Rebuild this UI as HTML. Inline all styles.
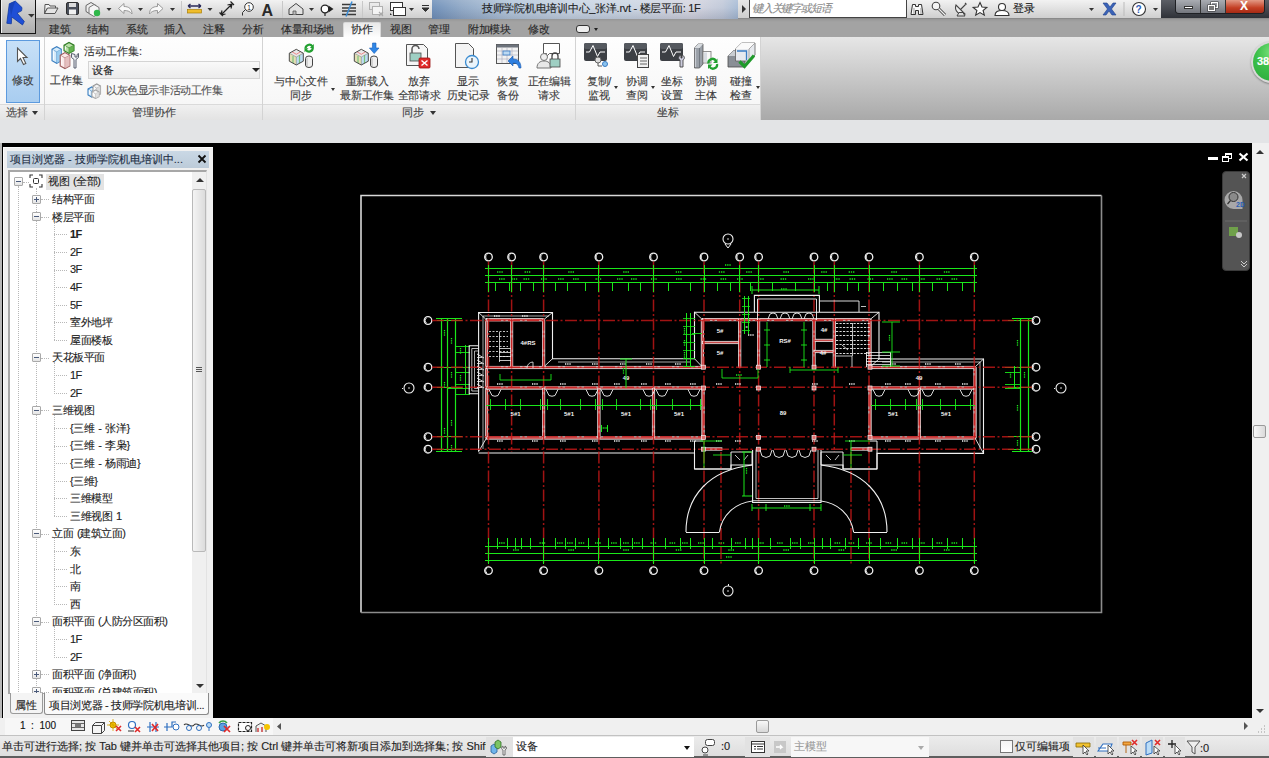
<!DOCTYPE html>
<html><head><meta charset="utf-8">
<style>
*{margin:0;padding:0;box-sizing:border-box}
html,body{width:1269px;height:758px;overflow:hidden;background:#e3e4e6;font-family:"Liberation Sans",sans-serif;font-size:11px;color:#222}
.t,.tab,.row,.btxt,.plab{-webkit-text-stroke:0.12px currentColor}
.a{position:absolute}
.t{position:absolute;white-space:nowrap;line-height:1}
#tb{left:0;top:0;width:1269px;height:19px;background:linear-gradient(#f2f2f2,#cfcfcf);border-bottom:1px solid #8a8a8a}
#tabs{left:0;top:19px;width:1269px;height:18px;background:linear-gradient(#979797,#a3a3a3 3px,#a3a3a3)}
#logo{left:0;top:0;width:36px;height:34px;background:linear-gradient(#dadada,#adadad);border:1px solid #151515;border-top:0;box-shadow:inset 1px 0 0 #f2f2f2}
#ribbon{left:0;top:37px;width:1269px;height:83px;background:linear-gradient(#e6e6e6,#a9a9a9)}
.panel{position:absolute;top:0;height:83px;background:linear-gradient(#fefefe,#f5f5f5);border-right:1px solid #d3d3d3}
.plab{position:absolute;left:0;bottom:0;width:100%;height:16px;background:linear-gradient(#f0f0f0,#e3e3e3);border-top:1px solid #dadada;text-align:center;font-size:11px;line-height:15px;color:#444}
.btxt{position:absolute;width:60px;text-align:center;font-size:11px;letter-spacing:-0.25px;line-height:14px;color:#3a3a3a;white-space:nowrap}
.tab{position:absolute;top:24px;font-size:11px;letter-spacing:-0.5px;color:#2a2a2a;line-height:1;white-space:nowrap}
#frame{left:0;top:143px;width:1269px;height:575px;background:#000}
#browser{left:3px;top:147px;width:210px;height:571px;background:#f0f0f0;border-left:1px solid #fcfcfc;border-top:1px solid #fcfcfc}
#canvas{left:213px;top:143px;width:1039px;height:575px;background:#000}
#vscroll{left:1252px;top:143px;width:17px;height:575px;background:#f0f0f0}
#vcb{left:0;top:718px;width:1269px;height:18px;background:#f0f0f0}
#status{left:0;top:735px;width:1269px;height:23px;background:linear-gradient(#ececec,#dedede);border-top:1px solid #c2c2c2;border-bottom:2px solid #5e5e5e}
.row{position:absolute;font-size:11px;letter-spacing:-0.5px;word-spacing:1.5px;line-height:14px;color:#222;white-space:nowrap}
.exp{position:absolute;width:9px;height:9px;border:1px solid #a9a9a9;background:linear-gradient(#fff,#e4e4e4);border-radius:1px}
.exp:before{content:"";position:absolute;left:1px;top:3px;width:5px;height:1px;background:#4a5a7a}
.exp.p:after{content:"";position:absolute;left:3px;top:1px;width:1px;height:5px;background:#4a5a7a}
.dv{position:absolute;border-left:1px dotted #b8b8b8;width:0}
.dh{position:absolute;border-top:1px dotted #b8b8b8;height:0}
</style></head><body>
<div id="tb" class="a"></div>
<div id="tabs" class="a"></div>
<div id="logo" class="a">
<svg width="35" height="34" style="position:absolute;left:0;top:0">
<path d="M5.8 23.3 L8.3 3.8 L14.3 1.1 L21 7.6 L20.6 10.8 L16.1 13 L23.3 21.5 L21.5 24.9 L10.8 17 L10.3 23.8 Z" fill="#1f4fd6" stroke="#123a9e" stroke-width="0.8"/>
<path d="M8.3 3.8 L14.3 1.1 L12 8 L10 16z" fill="#153fae" opacity=".7"/>
<path d="M27 14.1 L33.6 14.1 L30.5 17.5 Z" fill="#333"/>
</svg>
</div>
<!-- quick access -->
<svg class="a" style="left:0;top:0" width="432" height="19">
 <path d="M45 4.5 h4 l1 1.5 h5.5 v2.5 h-8.5 l-2.5 5.5z" fill="#f4f4f4" stroke="#555" stroke-width="1"/>
 <path d="M44.5 13.5 l3-5.5 h10.5 l-3 5.5z" fill="#e4e4e4" stroke="#555" stroke-width="1"/>
 <rect x="66.5" y="2.5" width="12" height="12" rx="1.5" fill="#4a4f5a" stroke="#2e2e2e"/>
 <rect x="69" y="3" width="7" height="4" fill="#dcdcdc"/>
 <rect x="69" y="9.5" width="7" height="5" fill="#f0f0f0"/>
 <path d="M86 5.5 l5-3 l5 3 v6 l-5 3 l-5-3z" fill="#eee" stroke="#666"/>
 <path d="M89 7.5 l5-3 l5 3 v6 l-5 3 l-5-3z" fill="#f6f6f6" stroke="#777"/>
 <circle cx="97" cy="13" r="3.2" fill="#2fb84a"/>
 <path d="M106.5 8 h5 l-2.5 3z" fill="#333"/>
 <path d="M118.5 8.5 l5.5-5 v3 c5 0 8 2.5 8 7.5 c-2-2.5-4-3.5-8-3.5 v3z" fill="#f9f9f9" stroke="#9a9a9a"/>
 <path d="M138 8 h5 l-2.5 3z" fill="#333"/>
 <path d="M163 8.5 l-5.5-5 v3 c-5 0-8 2.5-8 7.5 c2-2.5 4-3.5 8-3.5 v3z" fill="#f9f9f9" stroke="#9a9a9a"/>
 <path d="M170 8 h5 l-2.5 3z" fill="#333"/>
 <line x1="181.5" y1="1" x2="181.5" y2="18" stroke="#c8c8c8"/>
 <rect x="187.5" y="9.5" width="14" height="3.5" fill="#efbd2c" stroke="#a87e08" stroke-width=".7"/>
 <path d="M188 6 h13 M188 6 l2.5-2 M188 6 l2.5 2 M201 6 l-2.5-2 M201 6 l-2.5 2" stroke="#2a2a5a" stroke-width="1.3" fill="none"/>
 <path d="M207.5 8 h5 l-2.5 3z" fill="#333"/>
 <path d="M221 15 l11-11 M221 15 l1-4.5 M221 15 l4.5-1 M232 4 l-4.5 1 M232 4 l-1 4.5 M219.5 12.5 l3.5 3.5 M230.5 1.5 l3.5 3.5" stroke="#222" stroke-width="1.2" fill="none"/>
 <circle cx="249" cy="7" r="4.3" fill="#fff" stroke="#333"/>
 <text x="247.2" y="9.5" font-size="6.5" fill="#222" font-family="Liberation Sans">1</text>
 <path d="M245 10 l-2.5 2.5 v3" stroke="#333" fill="none"/>
 <text x="261.5" y="15.5" font-size="16" font-weight="bold" fill="#2a2a2a" font-family="Liberation Sans">A</text>
 <line x1="282.5" y1="1" x2="282.5" y2="18" stroke="#c8c8c8"/>
 <path d="M289 9 l7-5.5 l7 5.5 v5.5 h-14z" fill="#e2e2e2" stroke="#444"/>
 <path d="M293 14.5 v-3.5 h3 v3.5" fill="#bbb" stroke="#555" stroke-width=".8"/>
 <path d="M309 8 h5 l-2.5 3z" fill="#333"/>
 <circle cx="325" cy="9" r="3.8" fill="#fff" stroke="#222" stroke-width="1.3"/>
 <path d="M328.5 5.5 l5 3.5 l-5 3.5z" fill="#222"/>
 <path d="M325 13 v3" stroke="#222" stroke-width="1.2"/>
 <path d="M342 4.5 h14 M342 8 h14 M342 11 h14 M342 14.5 h14" stroke="#3a3a3a" stroke-width="1.4"/>
 <path d="M346 16.5 l6-15" stroke="#3e8ed6" stroke-width="1.5"/>
 <line x1="362.5" y1="1" x2="362.5" y2="18" stroke="#c8c8c8"/>
 <rect x="369.5" y="2.5" width="10" height="7" fill="none" stroke="#b0b0b0"/>
 <rect x="372.5" y="6.5" width="10" height="8" fill="#f4f4f4" stroke="#b0b0b0"/>
 <path d="M379 12 l4 4 M383 12 l-4 4" stroke="#aaa" stroke-width="1.2"/>
 <rect x="390.5" y="2.5" width="12" height="8" fill="#fff" stroke="#333"/>
 <rect x="393.5" y="7.5" width="12" height="8" fill="#fff" stroke="#333"/>
 <path d="M390 13 l2 2 l-2 0z" fill="#333"/>
 <path d="M409 8 h5 l-2.5 3z" fill="#333"/>
 <path d="M422 5.5 h7 M422 8 h7 l-3.5 3.5z" stroke="#333" fill="#333"/>
</svg>
<!-- title -->
<div class="a" style="left:432px;top:0;width:306px;height:19px;background:linear-gradient(rgba(255,255,255,.12),rgba(0,0,0,0) 40%,rgba(20,30,60,.14)),linear-gradient(90deg,#7393bb 0%,#93abc8 10%,#b4c6da 25%,#c9d5e3 45%,#cdd7e4 65%,#d6d6e0 85%,#c2cada 95%,#a9bdd6 100%)"></div>
<div class="t" style="left:482px;top:3px;font-size:11px;color:#222;letter-spacing:-0.27px">技师学院机电培训中心_张洋.rvt - 楼层平面: 1F</div>
<div class="a" style="left:738px;top:0;width:11px;height:18px;background:linear-gradient(#e8e8e8,#cfcfcf)"></div>
<div class="a" style="left:742px;top:5px;width:0;height:0;border-top:4px solid transparent;border-bottom:4px solid transparent;border-left:4px solid #333"></div>
<div class="a" style="left:749px;top:0;width:158px;height:18px;background:#fff;border:1px solid #444;border-top:0"></div>
<div class="t" style="left:752px;top:3px;font-size:11px;font-style:italic;color:#8a8a8a;letter-spacing:-1.2px">键入关键字或短语</div>
<svg class="a" style="left:907px;top:0" width="254" height="18">
 <!-- binoculars -->
 <path d="M5.5 4.5 h3 v2 h3 v-2 h3 l1.5 10 h-4.5 v-4 h-3 v4 h-4.5z" fill="#fafafa" stroke="#333" stroke-width="1"/>
 <path d="M7 8 v6 M14 8 v6" stroke="#999" stroke-width="1"/>
 <!-- key -->
 <circle cx="29" cy="6" r="3.8" fill="#f4f4f4" stroke="#444" stroke-width="1.1"/>
 <path d="M31.5 8.5 l6.5 6.5" stroke="#444" stroke-width="3"/>
 <path d="M31.5 8.5 l6.5 6.5" stroke="#f0f0f0" stroke-width="1.2"/>
 <!-- satellite -->
 <path d="M49 5 a7 7 0 0 0 9 9z" fill="#eee" stroke="#444" stroke-width="1.1"/>
 <path d="M53.5 9.5 l5-5 M58 3 l1.5 1.5" stroke="#444" stroke-width="1.1"/>
 <path d="M50 16 h8 l-2-3.5 h-4z" fill="#ddd" stroke="#444" stroke-width="1"/>
 <!-- star -->
 <path d="M73 2.5 l2 4.5 l4.8.4 l-3.7 3.1 l1.2 4.7 l-4.3-2.6 l-4.3 2.6 l1.2-4.7 l-3.7-3.1 l4.8-.4z" fill="#fff" stroke="#333" stroke-width="1.1"/>
 <!-- user -->
 <circle cx="95" cy="7" r="3.5" fill="#fff" stroke="#333" stroke-width="1.1"/>
 <path d="M88 15.5 c0-4 3-5 7-5 s7 1 7 5z" fill="#fff" stroke="#333" stroke-width="1.1"/>
 <path d="M182 8 h5 l-2.5 3z" fill="#333"/>
 <!-- X -->
 <path d="M196 3 h4 l3 4 l3-4 h3 l-4.5 6 l4.5 6 h-4 l-3-4 l-3 4 h-3 l4.5-6z" fill="#3b63b8" stroke="#1e3f8a" stroke-width=".6"/>
 <line x1="217" y1="2" x2="217" y2="16" stroke="#bbb"/>
 <circle cx="232" cy="9" r="6.5" fill="#fff" stroke="#333" stroke-width="1.1"/>
 <text x="228.5" y="13" font-size="10" font-weight="bold" fill="#2e5db8" font-family="Liberation Sans">?</text>
 <path d="M246 8 h5 l-2.5 3z" fill="#333"/>
</svg>
<div class="t" style="left:1013px;top:3px;font-size:11px;color:#222">登录</div>
<div class="a" style="left:1161px;top:0;width:108px;height:18px;background:linear-gradient(#5c5f66,#2f3238)"></div>
<div class="a" style="left:1175px;top:0;width:90px;height:14px;border:1px solid #1e2024;border-top:0;border-radius:0 0 4px 4px;overflow:hidden">
  <div class="a" style="left:0;top:0;width:25px;height:13px;background:linear-gradient(#a9acb2,#74777e);border-right:1px solid #333"></div>
  <div class="a" style="left:25px;top:0;width:25px;height:13px;background:linear-gradient(#a9acb2,#74777e);border-right:1px solid #333"></div>
  <div class="a" style="left:50px;top:0;width:40px;height:13px;background:linear-gradient(#e39a86,#c43f24 60%,#a52a15)"></div>
  <div class="a" style="left:8px;top:6px;width:9px;height:3px;background:#fff;border:1px solid #333"></div>
  <div class="a" style="left:35px;top:2px;width:7px;height:6px;border:1.5px solid #fff;box-shadow:0 0 0 .5px #333"></div>
  <div class="a" style="left:32px;top:5px;width:7px;height:6px;border:1.5px solid #fff;background:#777;box-shadow:0 0 0 .5px #333"></div>
  <div class="t" style="left:64px;top:0px;font-size:12px;font-weight:bold;color:#fff">X</div>
</div>

<!-- tabs -->
<div class="tab" style="left:49px">建筑</div>
<div class="tab" style="left:87px">结构</div>
<div class="tab" style="left:126px">系统</div>
<div class="tab" style="left:164px">插入</div>
<div class="tab" style="left:203px">注释</div>
<div class="tab" style="left:242px">分析</div>
<div class="tab" style="left:281px">体量和场地</div>
<div class="a" style="left:343px;top:22px;width:38px;height:15px;background:linear-gradient(#e9e9e9,#fdfdfd);border:1px solid #d8d8d8;border-bottom:0;border-radius:2px 2px 0 0"></div>
<div class="tab" style="left:351px">协作</div>
<div class="tab" style="left:390px">视图</div>
<div class="tab" style="left:428px">管理</div>
<div class="tab" style="left:468px">附加模块</div>
<div class="tab" style="left:528px">修改</div>
<div class="a" style="left:576px;top:25px;width:14px;height:8px;border:1px solid #333;border-radius:3px;background:#eee"></div>
<div class="a" style="left:594px;top:28px;width:0;height:0;border-left:2.5px solid transparent;border-right:2.5px solid transparent;border-top:3px solid #222"></div>

<div id="ribbon" class="a">
  <div class="panel" style="left:0;width:45px">
    <div class="a" style="left:6px;top:3px;width:34px;height:63px;background:linear-gradient(#c7e0f7,#a9cdf0);border:1px solid #5c9ade"></div>
    <svg class="a" style="left:16px;top:10px" width="14" height="19"><path d="M1.5 1 L1.5 14.5 L4.5 11.5 L7.5 17.5 L9.8 16.5 L7 10.5 L11 10.5 Z" fill="#fff" stroke="#555" stroke-width="1.1"/></svg>
    <div class="btxt" style="left:-7px;top:36px">修改</div>
    <div class="plab" style="text-align:left;padding-left:6px">选择<span style="position:absolute;left:32px;top:6px;width:0;height:0;border-left:3.5px solid transparent;border-right:3.5px solid transparent;border-top:4px solid #333"></span></div>
  </div>
  <div class="panel" style="left:45px;width:218px">
    <svg class="a" style="left:5px;top:4px" width="32" height="30"><path d="M2 8.285 L6.7 5.7 L11.4 8.285 V19.715 L6.7 22.3 L2 19.715Z" fill="#d6ecfb" stroke="#3c7fc0" stroke-width="1.1"/><path d="M2 8.285 L6.7 10.870000000000001 L11.4 8.285 M6.7 10.870000000000001 V22.3" fill="none" stroke="#3c7fc0" stroke-width=".6"/><path d="M6.7 10.870000000000001 L11.4 8.285 V19.715 L6.7 22.3Z" fill="#8cc6ee" opacity=".8"/><path d="M3.5 9.285 V18.715" stroke="#fff" stroke-width="1.2" opacity=".8"/><path d="M14 4.15 L19.0 1.4 L24 4.15 V9.65 L19.0 12.4 L14 9.65Z" fill="#b9e0a8" stroke="#2f7a24" stroke-width="1.1"/><path d="M14 4.15 L19.0 6.9 L24 4.15 M19.0 6.9 V12.4" fill="none" stroke="#2f7a24" stroke-width=".6"/><path d="M19.0 6.9 L24 4.15 V9.65 L19.0 12.4Z" fill="#4fa83a" opacity=".8"/><path d="M15.5 5.15 V8.65" stroke="#fff" stroke-width="1.2" opacity=".8"/><path d="M10.2 14.24 L15.0 11.6 L19.8 14.24 V24.86 L15.0 27.5 L10.2 24.86Z" fill="#fbe8e8" stroke="#9a5a5a" stroke-width="1.1"/><path d="M10.2 14.24 L15.0 16.880000000000003 L19.8 14.24 M15.0 16.880000000000003 V27.5" fill="none" stroke="#9a5a5a" stroke-width=".6"/><path d="M15.0 16.880000000000003 L19.8 14.24 V24.86 L15.0 27.5Z" fill="#e0b4b4" opacity=".8"/><path d="M11.7 15.24 V23.86" stroke="#fff" stroke-width="1.2" opacity=".8"/><path d="M21.5 12.5 v4 l2.5 2 v8.5 h2 v-8.5 l2.5 -2 v-4 l-1.5 1 v2.5 h-2 v-2.5z" fill="#eef0f4" stroke="#5a6070" stroke-width="1"/></svg>
    <div class="t" style="left:5px;top:38px;font-size:11px;color:#3a3a3a">工作集</div>
    <div class="t" style="left:39px;top:9px;font-size:11px;color:#3a3a3a">活动工作集:</div>
    <div class="a" style="left:43px;top:24px;width:172px;height:18px;background:linear-gradient(#f9f9f9,#ececec);border:1px solid #d4d4d4"></div>
    <div class="t" style="left:47px;top:28px;font-size:11px;color:#222">设备</div>
    <div class="a" style="left:207px;top:31px;width:0;height:0;border-left:4px solid transparent;border-right:4px solid transparent;border-top:4px solid #222"></div>
    <svg class="a" style="left:42px;top:46px" width="16" height="16"><path d="M1 6.0625 L4.75 4 L8.5 6.0625 V11.9375 L4.75 14 L1 11.9375Z" fill="#d6ecfb" stroke="#3c7fc0" stroke-width="1.1"/><path d="M1 6.0625 L4.75 8.125 L8.5 6.0625 M4.75 8.125 V14" fill="none" stroke="#3c7fc0" stroke-width=".6"/><path d="M4.75 8.125 L8.5 6.0625 V11.9375 L4.75 14Z" fill="#6fb0e8" opacity=".8"/><path d="M2.5 7.0625 V10.9375" stroke="#fff" stroke-width="1.2" opacity=".8"/><path d="M6 3.0625 L9.75 1 L13.5 3.0625 V10.9375 L9.75 13 L6 10.9375Z" fill="#f4f4f4" stroke="#9a9a9a" stroke-width="1.1"/><path d="M6 3.0625 L9.75 5.125 L13.5 3.0625 M9.75 5.125 V13" fill="none" stroke="#9a9a9a" stroke-width=".6"/><path d="M9.75 5.125 L13.5 3.0625 V10.9375 L9.75 13Z" fill="#d4d4d4" opacity=".8"/><path d="M7.5 4.0625 V9.9375" stroke="#fff" stroke-width="1.2" opacity=".8"/><path d="M5 8.925 L8.5 7 L12 8.925 V13.575 L8.5 15.5 L5 13.575Z" fill="#f6f6f6" stroke="#a8a8a8" stroke-width="1.1"/><path d="M5 8.925 L8.5 10.850000000000001 L12 8.925 M8.5 10.850000000000001 V15.5" fill="none" stroke="#a8a8a8" stroke-width=".6"/><path d="M8.5 10.850000000000001 L12 8.925 V13.575 L8.5 15.5Z" fill="#dadada" opacity=".8"/><path d="M6.5 9.925 V12.575" stroke="#fff" stroke-width="1.2" opacity=".8"/></svg>
    <div class="t" style="left:61px;top:48px;font-size:11px;letter-spacing:-0.4px;color:#555">以灰色显示非活动工作集</div>
    <div class="plab">管理协作</div>
  </div>
  <div class="panel" style="left:263px;width:313px">
    <!-- sync with central -->
    <svg class="a" style="left:25px;top:5px" width="30" height="28">
      <path d="M8.3 7.3 L15.3 11.2 V19.2 L8.3 23 L1.3 19.2 V11.2Z" fill="#e4dfb4"/>
      <path d="M8.3 15 L15.3 11.2 V19.2 L8.3 23Z" fill="#bcdcf2"/>
      <path d="M8.3 7.3 L15.3 11.2 L8.3 15 L1.3 11.2Z" fill="#e8e8e8"/>
      <path d="M4 9.8 L8.3 12.3 L12.5 9.8" fill="none" stroke="#e88" stroke-width="1"/>
      <path d="M5 14 V21 M11.5 13 V21" stroke="#7cc47c" stroke-width="1.2"/>
      <path d="M8.3 15 V23 M8.3 15 L15.3 11.2 M8.3 15 L1.3 11.2" stroke="#888" stroke-width=".6"/>
      <path d="M8.3 7.3 L15.3 11.2 V19.2 L8.3 23 L1.3 19.2 V11.2Z" fill="none" stroke="#4a4a4a" stroke-width="1"/>
      <rect x="17.5" y="14" width="7" height="11.5" rx="3.5" ry="2.5" fill="#f0f0f0" stroke="#444" stroke-width="1"/>
      <path d="M19 16 V24" stroke="#c8c8c8" stroke-width="1.5"/>
      <path d="M17.5 6.5 a3.8 3.8 0 0 1 6.8 -2.3" fill="none" stroke="#22a030" stroke-width="2.2"/>
      <path d="M25.8 2 v4 h-4z" fill="#22a030"/>
      <path d="M24.8 5.8 a3.8 3.8 0 0 1 -6.8 2.3" fill="none" stroke="#22a030" stroke-width="2.2"/>
      <path d="M16.5 10.2 v-4 h4z" fill="#22a030"/>
    </svg>
    <div class="btxt" style="left:8px;top:37px">与中心文件<br>同步</div>
    <div class="a" style="left:68px;top:51px;width:0;height:0;border-left:2.5px solid transparent;border-right:2.5px solid transparent;border-top:3px solid #333"></div>
    <!-- reload latest -->
    <svg class="a" style="left:90px;top:5px" width="30" height="28">
      <path d="M8.3 7.3 L15.3 11.2 V19.2 L8.3 23 L1.3 19.2 V11.2Z" fill="#e4dfb4"/>
      <path d="M8.3 15 L15.3 11.2 V19.2 L8.3 23Z" fill="#bcdcf2"/>
      <path d="M8.3 7.3 L15.3 11.2 L8.3 15 L1.3 11.2Z" fill="#e8e8e8"/>
      <path d="M4 9.8 L8.3 12.3 L12.5 9.8" fill="none" stroke="#e88" stroke-width="1"/>
      <path d="M5 14 V21 M11.5 13 V21" stroke="#7cc47c" stroke-width="1.2"/>
      <path d="M8.3 15 V23 M8.3 15 L15.3 11.2 M8.3 15 L1.3 11.2" stroke="#888" stroke-width=".6"/>
      <path d="M8.3 7.3 L15.3 11.2 V19.2 L8.3 23 L1.3 19.2 V11.2Z" fill="none" stroke="#4a4a4a" stroke-width="1"/>
      <rect x="17.5" y="14" width="7" height="11.5" rx="3.5" ry="2.5" fill="#f0f0f0" stroke="#444" stroke-width="1"/>
      <path d="M19 16 V24" stroke="#c8c8c8" stroke-width="1.5"/>
      <path d="M19.5 1 h3.5 v5 h3 l-4.8 5.5 l-4.8 -5.5 h3z" fill="#2f86e6" stroke="#1a5fb8" stroke-width=".6"/>
    </svg>
    <div class="btxt" style="left:74px;top:37px">重新载入<br>最新工作集</div>
    <!-- relinquish -->
    <svg class="a" style="left:141px;top:5px" width="30" height="28">
      <path d="M2.5 2.5 h17 l4 4 v17 h-21z" fill="#f6f6f6" stroke="#555"/>
      <rect x="6" y="11" width="11" height="8" fill="#9ecfc3" stroke="#4a4a4a" stroke-width=".8"/>
      <path d="M8 11 v-4 a3.5 3.5 0 0 1 7 0" fill="none" stroke="#555" stroke-width="1.5"/>
      <rect x="15" y="16" width="11" height="10" rx="1" fill="#e02a2a" stroke="#9b1010" stroke-width=".8"/>
      <path d="M17.5 18.5 l6 5 M23.5 18.5 l-6 5" stroke="#fff" stroke-width="1.4"/>
    </svg>
    <div class="btxt" style="left:126px;top:37px">放弃<br>全部请求</div>
    <!-- show history -->
    <svg class="a" style="left:190px;top:5px" width="30" height="28">
      <path d="M2.5 1.5 h13 l5 5 v19 h-18z" fill="#f4f4f4" stroke="#555"/>
      <circle cx="19" cy="20" r="6.5" fill="#eaf4fb" stroke="#3a8bd0" stroke-width="1.3"/>
      <path d="M19 16 v4 h-3" fill="none" stroke="#333" stroke-width="1.1"/>
    </svg>
    <div class="btxt" style="left:175px;top:37px">显示<br>历史记录</div>
    <!-- restore backup -->
    <svg class="a" style="left:231px;top:5px" width="30" height="28">
      <rect x="2.5" y="2.5" width="22" height="19" fill="#f2f2f2" stroke="#555"/>
      <rect x="2.5" y="2.5" width="22" height="3" fill="#6d737c"/>
      <path d="M3 9 h21 M3 13 h21 M3 17 h21 M8 6 v15 M13 6 v15 M18 6 v15" stroke="#aab" stroke-width=".6"/>
      <rect x="9" y="9" width="7" height="4" fill="#bcd9f2" stroke="#3a7cc4" stroke-width=".8"/>
      <path d="M27 26 c0-6 -3-9 -8-9 v-3 l-5 5 l5 5 v-3 c3 0 5 1 6 5z" fill="#2e7fe0" stroke="#1a5bb0" stroke-width=".6"/>
    </svg>
    <div class="btxt" style="left:215px;top:37px">恢复<br>备份</div>
    <!-- editing requests -->
    <svg class="a" style="left:272px;top:5px" width="30" height="28">
      <path d="M8.5 1.5 h16 v10 h-10 l-3 3 v-3 h-3z" fill="#fff" stroke="#555"/>
      <circle cx="9" cy="15" r="3.5" fill="#eee" stroke="#777"/>
      <path d="M2 26 c0-5 3-7 7-7 s7 2 7 7z" fill="#e8e8e8" stroke="#777"/>
      <rect x="15" y="17" width="10" height="8" fill="#9ecfc3" stroke="#444" stroke-width=".8"/>
      <path d="M17 17 v-3 a3 3 0 0 1 6 0 v3" fill="none" stroke="#444" stroke-width="1.3"/>
    </svg>
    <div class="btxt" style="left:256px;top:37px">正在编辑<br>请求</div>
    <div class="plab" style="padding-right:13px">同步<span style="position:absolute;left:167px;top:6px;width:0;height:0;border-left:3.5px solid transparent;border-right:3.5px solid transparent;border-top:4px solid #333"></span></div>
  </div>
  <div class="panel" style="left:576px;width:185px">
    <svg class="a" style="left:7px;top:5px" width="30" height="28">
      <rect x="1" y="1" width="23" height="18" rx="2" fill="#3c3f44"/>
      <rect x="1" y="1" width="23" height="6" rx="2" fill="#55595f"/>
      <path d="M3 10 h3.5 l3.5-6.5 l4.5 11 l2.5-4.5 h5" fill="none" stroke="#fff" stroke-width="1"/>
      <circle cx="15" cy="18" r="3" fill="#ddd" stroke="#666"/>
      <circle cx="22" cy="22" r="2.5" fill="#8cc4ee" stroke="#3a7cc4"/>
      <path d="M15 21 v3 h4" fill="none" stroke="#333" stroke-width=".8"/>
    </svg>
    <div class="btxt" style="left:-7px;top:37px">复制/<br>监视</div>
    <div class="a" style="left:38px;top:49px;width:0;height:0;border-left:2.5px solid transparent;border-right:2.5px solid transparent;border-top:3px solid #333"></div>
    <svg class="a" style="left:47px;top:5px" width="30" height="28">
      <rect x="1" y="1" width="23" height="18" rx="2" fill="#3c3f44"/>
      <rect x="1" y="1" width="23" height="6" rx="2" fill="#55595f"/>
      <path d="M3 10 h3.5 l3.5-6.5 l4.5 11 l2.5-4.5 h5" fill="none" stroke="#fff" stroke-width="1"/>
      <rect x="14.5" y="12.5" width="11" height="13" fill="#f2f2f2" stroke="#444"/>
      <path d="M17 16 h7 M17 19 h7 M17 22 h7" stroke="#555" stroke-width=".9"/>
    </svg>
    <div class="btxt" style="left:31px;top:37px">协调<br>查阅</div>
    <div class="a" style="left:75px;top:49px;width:0;height:0;border-left:2.5px solid transparent;border-right:2.5px solid transparent;border-top:3px solid #333"></div>
    <svg class="a" style="left:83px;top:5px" width="30" height="28">
      <rect x="1" y="1" width="23" height="18" rx="2" fill="#3c3f44"/>
      <rect x="1" y="1" width="23" height="6" rx="2" fill="#55595f"/>
      <path d="M3 10 h3.5 l3.5-6.5 l4.5 11 l2.5-4.5 h5" fill="none" stroke="#fff" stroke-width="1"/>
      <path d="M22 13 c-3 1-3 4-1 5 v7 h3 v-7 c2-1 2-4-1-5 v3 h-1z" fill="#ccd" stroke="#444" stroke-width=".9"/>
    </svg>
    <div class="btxt" style="left:66px;top:37px">坐标<br>设置</div>
    <svg class="a" style="left:117px;top:5px" width="30" height="28">
      <path d="M1.5 6 L5 2 H10 V22 L6.5 26 H1.5Z" fill="#9aa0a8" stroke="#555" stroke-width=".8"/>
      <path d="M5 2 H10 L6.5 6 H1.5Z" fill="#d8dce0"/>
      <path d="M6.5 6 V26" stroke="#6a7078" stroke-width=".8"/>
      <path d="M2.5 7 V25" stroke="#c8ccd2" stroke-width="1.2"/>
      <rect x="10" y="9.5" width="8" height="11.5" fill="#f8f8f8" stroke="#777" stroke-width=".8"/>
      <rect x="11" y="10.5" width="3" height="9.5" fill="#d8dce2"/>
      <path d="M15.5 21.5 a4 4 0 0 1 7.5 -2.5" fill="none" stroke="#22a030" stroke-width="2.3"/>
      <path d="M24.5 16.5 v4.5 h-4.5z" fill="#22a030"/>
      <path d="M24 22 a4 4 0 0 1 -7.5 2.5" fill="none" stroke="#22a030" stroke-width="2.3"/>
      <path d="M15 27 v-4.5 h4.5z" fill="#22a030"/>
    </svg>
    <div class="btxt" style="left:100px;top:37px">协调<br>主体</div>
    <svg class="a" style="left:150px;top:5px" width="32" height="28">
      <path d="M2 14 L7.5 8.5 H19 V25 H2Z" fill="#8a8f96" stroke="#4a4a4a" stroke-width=".8"/>
      <path d="M2 14 L7.5 8.5 H19 L13.5 14Z" fill="#c9cdd2"/>
      <path d="M9.5 7 L15.5 1 H29 V13 L23 19 H9.5Z" fill="#e6e9ee" stroke="#606060" stroke-width=".8"/>
      <path d="M9.5 7 L15.5 1 H29 L23 7Z" fill="#fafafa"/>
      <path d="M23 7 V19 M23 7 L29 1" stroke="#8a8a8a" stroke-width=".7"/>
      <path d="M11 9 H20.5 V18" fill="none" stroke="#3a7cc4" stroke-width="1.3"/>
      <path d="M13.5 19.5 L18.5 24.5 L28 13.5" fill="none" stroke="#1f9a2a" stroke-width="3.2"/>
    </svg>
    <div class="btxt" style="left:135px;top:37px">碰撞<br>检查</div>
    <div class="a" style="left:180px;top:49px;width:0;height:0;border-left:2.5px solid transparent;border-right:2.5px solid transparent;border-top:3px solid #333"></div>
    <div class="plab">坐标</div>
  </div>
</div>

<div id="frame" class="a"></div>
<div class="a" style="left:0;top:143px;width:2px;height:593px;background:#b9b9b9"></div>
<div id="browser" class="a"></div>
<!--BROWSER-->
<div class="a" style="left:7px;top:151px;width:202px;height:17px;background:linear-gradient(#cad8e5,#bccbd9)"></div>
<div class="t" style="left:10px;top:154px;font-size:11px;color:#1e2e44">项目浏览器 - 技师学院机电培训中...</div>
<svg class="a" style="left:197px;top:154px" width="10" height="10"><path d="M1.5 1.5 l7 7 M8.5 1.5 l-7 7" stroke="#111" stroke-width="1.8"/></svg>
<div class="a" style="left:8px;top:170px;width:199px;height:523px;background:#fff;border-left:2px solid #a7a7a7;border-top:2px solid #a7a7a7;border-right:1px solid #e3e3e3"></div>
<div id="tree" class="a" style="left:10px;top:172px;width:182px;height:521px;overflow:hidden">
<div class="dv" style="left:8px;top:14px;height:520px"></div>
<div class="dv" style="left:44px;top:50px;height:118px"></div>
<div class="dv" style="left:44px;top:190px;height:30px"></div>
<div class="dv" style="left:44px;top:243px;height:101px"></div>
<div class="dv" style="left:44px;top:366px;height:65px"></div>
<div class="dv" style="left:44px;top:454px;height:30px"></div>
<div class="dv" style="left:26px;top:16px;height:510px"></div>
<div class="exp" style="left:4px;top:5px"></div>
<div class="dh" style="left:13px;top:10px;width:6px"></div>
<svg class="a" style="left:19px;top:2px" width="14" height="14"><path d="M1 4 v-3 h3 M10 1 h3 v3 M13 10 v3 h-3 M4 13 h-3 v-3" fill="none" stroke="#333" stroke-width="1.1"/><rect x="4.5" y="4.5" width="5" height="5" rx="1" fill="none" stroke="#333"/></svg>
<div class="a" style="left:36px;top:2px;width:58px;height:16px;background:#e3e3e3"></div>
<div class="row" style="left:38px;top:2px">视图 (全部)</div>
<div class="exp p" style="left:22px;top:23px"></div>
<div class="dh" style="left:31px;top:27px;width:8px"></div>
<div class="row" style="left:42px;top:20px">结构平面</div>
<div class="exp m" style="left:22px;top:40px"></div>
<div class="dh" style="left:31px;top:45px;width:8px"></div>
<div class="row" style="left:42px;top:38px">楼层平面</div>
<div class="dh" style="left:44px;top:62px;width:13px"></div>
<div class="row" style="left:60px;top:55px"><b>1F</b></div>
<div class="dh" style="left:44px;top:80px;width:13px"></div>
<div class="row" style="left:60px;top:73px">2F</div>
<div class="dh" style="left:44px;top:98px;width:13px"></div>
<div class="row" style="left:60px;top:90px">3F</div>
<div class="dh" style="left:44px;top:115px;width:13px"></div>
<div class="row" style="left:60px;top:108px">4F</div>
<div class="dh" style="left:44px;top:133px;width:13px"></div>
<div class="row" style="left:60px;top:126px">5F</div>
<div class="dh" style="left:44px;top:150px;width:13px"></div>
<div class="row" style="left:60px;top:143px">室外地坪</div>
<div class="dh" style="left:44px;top:168px;width:13px"></div>
<div class="row" style="left:60px;top:161px">屋面楼板</div>
<div class="exp m" style="left:22px;top:181px"></div>
<div class="dh" style="left:31px;top:186px;width:8px"></div>
<div class="row" style="left:42px;top:178px">天花板平面</div>
<div class="dh" style="left:44px;top:203px;width:13px"></div>
<div class="row" style="left:60px;top:196px">1F</div>
<div class="dh" style="left:44px;top:221px;width:13px"></div>
<div class="row" style="left:60px;top:214px">2F</div>
<div class="exp m" style="left:22px;top:234px"></div>
<div class="dh" style="left:31px;top:238px;width:8px"></div>
<div class="row" style="left:42px;top:231px">三维视图</div>
<div class="dh" style="left:44px;top:256px;width:13px"></div>
<div class="row" style="left:60px;top:249px">{三维 - 张洋}</div>
<div class="dh" style="left:44px;top:274px;width:13px"></div>
<div class="row" style="left:60px;top:266px">{三维 - 李枭}</div>
<div class="dh" style="left:44px;top:291px;width:13px"></div>
<div class="row" style="left:60px;top:284px">{三维 - 杨雨迪}</div>
<div class="dh" style="left:44px;top:309px;width:13px"></div>
<div class="row" style="left:60px;top:302px">{三维}</div>
<div class="dh" style="left:44px;top:326px;width:13px"></div>
<div class="row" style="left:60px;top:319px">三维模型</div>
<div class="dh" style="left:44px;top:344px;width:13px"></div>
<div class="row" style="left:60px;top:337px">三维视图 1</div>
<div class="exp m" style="left:22px;top:357px"></div>
<div class="dh" style="left:31px;top:362px;width:8px"></div>
<div class="row" style="left:42px;top:354px">立面 (建筑立面)</div>
<div class="dh" style="left:44px;top:379px;width:13px"></div>
<div class="row" style="left:60px;top:372px">东</div>
<div class="dh" style="left:44px;top:397px;width:13px"></div>
<div class="row" style="left:60px;top:390px">北</div>
<div class="dh" style="left:44px;top:414px;width:13px"></div>
<div class="row" style="left:60px;top:407px">南</div>
<div class="dh" style="left:44px;top:432px;width:13px"></div>
<div class="row" style="left:60px;top:425px">西</div>
<div class="exp m" style="left:22px;top:445px"></div>
<div class="dh" style="left:31px;top:450px;width:8px"></div>
<div class="row" style="left:42px;top:442px">面积平面 (人防分区面积)</div>
<div class="dh" style="left:44px;top:467px;width:13px"></div>
<div class="row" style="left:60px;top:460px">1F</div>
<div class="dh" style="left:44px;top:485px;width:13px"></div>
<div class="row" style="left:60px;top:478px">2F</div>
<div class="exp p" style="left:22px;top:498px"></div>
<div class="dh" style="left:31px;top:502px;width:8px"></div>
<div class="row" style="left:42px;top:495px">面积平面 (净面积)</div>
<div class="exp p" style="left:22px;top:515px"></div>
<div class="dh" style="left:31px;top:520px;width:8px"></div>
<div class="row" style="left:42px;top:513px">面积平面 (总建筑面积)</div>
</div>
<div class="a" style="left:192px;top:172px;width:14px;height:521px;background:#f0f0f0"></div>
<div class="a" style="left:196px;top:178px;width:0;height:0;border-left:4px solid transparent;border-right:4px solid transparent;border-bottom:4px solid #333"></div>
<div class="a" style="left:192px;top:189px;width:14px;height:363px;background:linear-gradient(90deg,#f4f4f4,#dcdcdc);border:1px solid #b9b9b9;border-radius:2px"></div>
<svg class="a" style="left:195px;top:366px" width="8" height="8"><path d="M1 1.5 h6 M1 3.5 h6 M1 5.5 h6" stroke="#555"/></svg>
<div class="a" style="left:196px;top:684px;width:0;height:0;border-left:4px solid transparent;border-right:4px solid transparent;border-top:4px solid #333"></div>
<div class="a" style="left:8px;top:693px;width:201px;height:1px;background:#a7a7a7"></div>
<div class="a" style="left:10px;top:693px;width:33px;height:21px;background:#f4f4f4;border:1px solid #9a9a9a;border-top:0;border-radius:0 0 3px 3px"></div>
<div class="t" style="left:15px;top:700px;font-size:11px;letter-spacing:-0.5px;color:#222">属性</div>
<div class="a" style="left:44px;top:693px;width:165px;height:22px;background:#fafafa;border:1px solid #8a8a8a;border-top:0;border-radius:0 0 3px 3px"></div>
<div class="t" style="left:49px;top:700px;font-size:11px;color:#222;letter-spacing:-0.35px">项目浏览器 - 技师学院机电培训...</div>
<!--/BROWSER-->
<div id="canvas" class="a"></div>
<!--CAD-->
<svg class="a" style="left:213px;top:143px" width="1039" height="575" viewBox="213 143 1039 575">
<path d="M361 612.5 V195.5 H1101.5" stroke="#d8d8d8" stroke-width="1.6" fill="none"/>
<path d="M361 612.5 H1101.5 V195.5" stroke="#8c8c8c" stroke-width="1.6" fill="none"/>
<line x1="485" y1="268.5" x2="977" y2="268.5" stroke="#1ae81a" stroke-width="1.2" />
<line x1="485" y1="275.5" x2="977" y2="275.5" stroke="#1ae81a" stroke-width="1.2" />
<line x1="485" y1="282.5" x2="977" y2="282.5" stroke="#1ae81a" stroke-width="1.2" />
<line x1="488.5" y1="265" x2="488.5" y2="292" stroke="#1ae81a" stroke-width="1" />
<line x1="511.5" y1="265" x2="511.5" y2="292" stroke="#1ae81a" stroke-width="1" />
<line x1="543.5" y1="265" x2="543.5" y2="292" stroke="#1ae81a" stroke-width="1" />
<line x1="598.5" y1="265" x2="598.5" y2="292" stroke="#1ae81a" stroke-width="1" />
<line x1="653.5" y1="265" x2="653.5" y2="292" stroke="#1ae81a" stroke-width="1" />
<line x1="704.5" y1="265" x2="704.5" y2="292" stroke="#1ae81a" stroke-width="1" />
<line x1="739.5" y1="265" x2="739.5" y2="292" stroke="#1ae81a" stroke-width="1" />
<line x1="758.5" y1="265" x2="758.5" y2="292" stroke="#1ae81a" stroke-width="1" />
<line x1="814.5" y1="265" x2="814.5" y2="292" stroke="#1ae81a" stroke-width="1" />
<line x1="834.5" y1="265" x2="834.5" y2="292" stroke="#1ae81a" stroke-width="1" />
<line x1="869.5" y1="265" x2="869.5" y2="292" stroke="#1ae81a" stroke-width="1" />
<line x1="919.5" y1="265" x2="919.5" y2="292" stroke="#1ae81a" stroke-width="1" />
<line x1="974.5" y1="265" x2="974.5" y2="292" stroke="#1ae81a" stroke-width="1" />
<line x1="495.5" y1="282" x2="495.5" y2="291" stroke="#1ae81a" stroke-width="1" />
<line x1="509.5" y1="282" x2="509.5" y2="291" stroke="#1ae81a" stroke-width="1" />
<line x1="520.5" y1="282" x2="520.5" y2="291" stroke="#1ae81a" stroke-width="1" />
<line x1="533.5" y1="282" x2="533.5" y2="291" stroke="#1ae81a" stroke-width="1" />
<line x1="555.5" y1="282" x2="555.5" y2="291" stroke="#1ae81a" stroke-width="1" />
<line x1="567.5" y1="282" x2="567.5" y2="291" stroke="#1ae81a" stroke-width="1" />
<line x1="585.5" y1="282" x2="585.5" y2="291" stroke="#1ae81a" stroke-width="1" />
<line x1="612.5" y1="282" x2="612.5" y2="291" stroke="#1ae81a" stroke-width="1" />
<line x1="628.5" y1="282" x2="628.5" y2="291" stroke="#1ae81a" stroke-width="1" />
<line x1="640.5" y1="282" x2="640.5" y2="291" stroke="#1ae81a" stroke-width="1" />
<line x1="668.5" y1="282" x2="668.5" y2="291" stroke="#1ae81a" stroke-width="1" />
<line x1="690.5" y1="282" x2="690.5" y2="291" stroke="#1ae81a" stroke-width="1" />
<line x1="717.5" y1="282" x2="717.5" y2="291" stroke="#1ae81a" stroke-width="1" />
<line x1="730.5" y1="282" x2="730.5" y2="291" stroke="#1ae81a" stroke-width="1" />
<line x1="750.5" y1="282" x2="750.5" y2="291" stroke="#1ae81a" stroke-width="1" />
<line x1="772.5" y1="282" x2="772.5" y2="291" stroke="#1ae81a" stroke-width="1" />
<line x1="795.5" y1="282" x2="795.5" y2="291" stroke="#1ae81a" stroke-width="1" />
<line x1="827.5" y1="282" x2="827.5" y2="291" stroke="#1ae81a" stroke-width="1" />
<line x1="847.5" y1="282" x2="847.5" y2="291" stroke="#1ae81a" stroke-width="1" />
<line x1="858.5" y1="282" x2="858.5" y2="291" stroke="#1ae81a" stroke-width="1" />
<line x1="883.5" y1="282" x2="883.5" y2="291" stroke="#1ae81a" stroke-width="1" />
<line x1="897.5" y1="282" x2="897.5" y2="291" stroke="#1ae81a" stroke-width="1" />
<line x1="912.5" y1="282" x2="912.5" y2="291" stroke="#1ae81a" stroke-width="1" />
<line x1="932.5" y1="282" x2="932.5" y2="291" stroke="#1ae81a" stroke-width="1" />
<line x1="947.5" y1="282" x2="947.5" y2="291" stroke="#1ae81a" stroke-width="1" />
<line x1="962.5" y1="282" x2="962.5" y2="291" stroke="#1ae81a" stroke-width="1" />
<line x1="497.05" y1="272" x2="498.35" y2="272" stroke="#1ae81a" stroke-width="1.4" />
<line x1="499.25" y1="272" x2="500.55" y2="272" stroke="#1ae81a" stroke-width="1.4" />
<line x1="501.45" y1="272" x2="502.75" y2="272" stroke="#1ae81a" stroke-width="1.4" />
<line x1="524.6" y1="272" x2="525.9" y2="272" stroke="#1ae81a" stroke-width="1.4" />
<line x1="526.8000000000001" y1="272" x2="528.1" y2="272" stroke="#1ae81a" stroke-width="1.4" />
<line x1="529.0" y1="272" x2="530.3" y2="272" stroke="#1ae81a" stroke-width="1.4" />
<line x1="568.25" y1="272" x2="569.55" y2="272" stroke="#1ae81a" stroke-width="1.4" />
<line x1="570.45" y1="272" x2="571.75" y2="272" stroke="#1ae81a" stroke-width="1.4" />
<line x1="572.65" y1="272" x2="573.9499999999999" y2="272" stroke="#1ae81a" stroke-width="1.4" />
<line x1="623.2" y1="272" x2="624.5" y2="272" stroke="#1ae81a" stroke-width="1.4" />
<line x1="625.4000000000001" y1="272" x2="626.7" y2="272" stroke="#1ae81a" stroke-width="1.4" />
<line x1="627.6" y1="272" x2="628.9" y2="272" stroke="#1ae81a" stroke-width="1.4" />
<line x1="675.75" y1="272" x2="677.05" y2="272" stroke="#1ae81a" stroke-width="1.4" />
<line x1="677.95" y1="272" x2="679.25" y2="272" stroke="#1ae81a" stroke-width="1.4" />
<line x1="680.15" y1="272" x2="681.4499999999999" y2="272" stroke="#1ae81a" stroke-width="1.4" />
<line x1="718.85" y1="272" x2="720.15" y2="272" stroke="#1ae81a" stroke-width="1.4" />
<line x1="721.0500000000001" y1="272" x2="722.35" y2="272" stroke="#1ae81a" stroke-width="1.4" />
<line x1="723.25" y1="272" x2="724.55" y2="272" stroke="#1ae81a" stroke-width="1.4" />
<line x1="746.1500000000001" y1="272" x2="747.45" y2="272" stroke="#1ae81a" stroke-width="1.4" />
<line x1="748.3500000000001" y1="272" x2="749.6500000000001" y2="272" stroke="#1ae81a" stroke-width="1.4" />
<line x1="750.5500000000001" y1="272" x2="751.85" y2="272" stroke="#1ae81a" stroke-width="1.4" />
<line x1="783.3" y1="272" x2="784.5999999999999" y2="272" stroke="#1ae81a" stroke-width="1.4" />
<line x1="785.5" y1="272" x2="786.8" y2="272" stroke="#1ae81a" stroke-width="1.4" />
<line x1="787.6999999999999" y1="272" x2="788.9999999999999" y2="272" stroke="#1ae81a" stroke-width="1.4" />
<line x1="821.15" y1="272" x2="822.4499999999999" y2="272" stroke="#1ae81a" stroke-width="1.4" />
<line x1="823.35" y1="272" x2="824.65" y2="272" stroke="#1ae81a" stroke-width="1.4" />
<line x1="825.55" y1="272" x2="826.8499999999999" y2="272" stroke="#1ae81a" stroke-width="1.4" />
<line x1="848.65" y1="272" x2="849.9499999999999" y2="272" stroke="#1ae81a" stroke-width="1.4" />
<line x1="850.85" y1="272" x2="852.15" y2="272" stroke="#1ae81a" stroke-width="1.4" />
<line x1="853.05" y1="272" x2="854.3499999999999" y2="272" stroke="#1ae81a" stroke-width="1.4" />
<line x1="891.2" y1="272" x2="892.5" y2="272" stroke="#1ae81a" stroke-width="1.4" />
<line x1="893.4000000000001" y1="272" x2="894.7" y2="272" stroke="#1ae81a" stroke-width="1.4" />
<line x1="895.6" y1="272" x2="896.9" y2="272" stroke="#1ae81a" stroke-width="1.4" />
<line x1="943.8499999999999" y1="272" x2="945.1499999999999" y2="272" stroke="#1ae81a" stroke-width="1.4" />
<line x1="946.05" y1="272" x2="947.3499999999999" y2="272" stroke="#1ae81a" stroke-width="1.4" />
<line x1="948.2499999999999" y1="272" x2="949.5499999999998" y2="272" stroke="#1ae81a" stroke-width="1.4" />
<line x1="499.0" y1="279" x2="500.3" y2="279" stroke="#1ae81a" stroke-width="1.4" />
<line x1="501.2" y1="279" x2="502.5" y2="279" stroke="#1ae81a" stroke-width="1.4" />
<line x1="503.4" y1="279" x2="504.7" y2="279" stroke="#1ae81a" stroke-width="1.4" />
<line x1="511.5" y1="279" x2="512.8" y2="279" stroke="#1ae81a" stroke-width="1.4" />
<line x1="513.7" y1="279" x2="515.0" y2="279" stroke="#1ae81a" stroke-width="1.4" />
<line x1="515.9" y1="279" x2="517.1999999999999" y2="279" stroke="#1ae81a" stroke-width="1.4" />
<line x1="523.5" y1="279" x2="524.8" y2="279" stroke="#1ae81a" stroke-width="1.4" />
<line x1="525.7" y1="279" x2="527.0" y2="279" stroke="#1ae81a" stroke-width="1.4" />
<line x1="527.9" y1="279" x2="529.1999999999999" y2="279" stroke="#1ae81a" stroke-width="1.4" />
<line x1="541.0" y1="279" x2="542.3" y2="279" stroke="#1ae81a" stroke-width="1.4" />
<line x1="543.2" y1="279" x2="544.5" y2="279" stroke="#1ae81a" stroke-width="1.4" />
<line x1="545.4" y1="279" x2="546.6999999999999" y2="279" stroke="#1ae81a" stroke-width="1.4" />
<line x1="558.0" y1="279" x2="559.3" y2="279" stroke="#1ae81a" stroke-width="1.4" />
<line x1="560.2" y1="279" x2="561.5" y2="279" stroke="#1ae81a" stroke-width="1.4" />
<line x1="562.4" y1="279" x2="563.6999999999999" y2="279" stroke="#1ae81a" stroke-width="1.4" />
<line x1="573.0" y1="279" x2="574.3" y2="279" stroke="#1ae81a" stroke-width="1.4" />
<line x1="575.2" y1="279" x2="576.5" y2="279" stroke="#1ae81a" stroke-width="1.4" />
<line x1="577.4" y1="279" x2="578.6999999999999" y2="279" stroke="#1ae81a" stroke-width="1.4" />
<line x1="595.5" y1="279" x2="596.8" y2="279" stroke="#1ae81a" stroke-width="1.4" />
<line x1="597.7" y1="279" x2="599.0" y2="279" stroke="#1ae81a" stroke-width="1.4" />
<line x1="599.9" y1="279" x2="601.1999999999999" y2="279" stroke="#1ae81a" stroke-width="1.4" />
<line x1="617.0" y1="279" x2="618.3" y2="279" stroke="#1ae81a" stroke-width="1.4" />
<line x1="619.2" y1="279" x2="620.5" y2="279" stroke="#1ae81a" stroke-width="1.4" />
<line x1="621.4" y1="279" x2="622.6999999999999" y2="279" stroke="#1ae81a" stroke-width="1.4" />
<line x1="631.0" y1="279" x2="632.3" y2="279" stroke="#1ae81a" stroke-width="1.4" />
<line x1="633.2" y1="279" x2="634.5" y2="279" stroke="#1ae81a" stroke-width="1.4" />
<line x1="635.4" y1="279" x2="636.6999999999999" y2="279" stroke="#1ae81a" stroke-width="1.4" />
<line x1="651.0" y1="279" x2="652.3" y2="279" stroke="#1ae81a" stroke-width="1.4" />
<line x1="653.2" y1="279" x2="654.5" y2="279" stroke="#1ae81a" stroke-width="1.4" />
<line x1="655.4" y1="279" x2="656.6999999999999" y2="279" stroke="#1ae81a" stroke-width="1.4" />
<line x1="676.0" y1="279" x2="677.3" y2="279" stroke="#1ae81a" stroke-width="1.4" />
<line x1="678.2" y1="279" x2="679.5" y2="279" stroke="#1ae81a" stroke-width="1.4" />
<line x1="680.4" y1="279" x2="681.6999999999999" y2="279" stroke="#1ae81a" stroke-width="1.4" />
<line x1="700.5" y1="279" x2="701.8" y2="279" stroke="#1ae81a" stroke-width="1.4" />
<line x1="702.7" y1="279" x2="704.0" y2="279" stroke="#1ae81a" stroke-width="1.4" />
<line x1="704.9" y1="279" x2="706.1999999999999" y2="279" stroke="#1ae81a" stroke-width="1.4" />
<line x1="720.5" y1="279" x2="721.8" y2="279" stroke="#1ae81a" stroke-width="1.4" />
<line x1="722.7" y1="279" x2="724.0" y2="279" stroke="#1ae81a" stroke-width="1.4" />
<line x1="724.9" y1="279" x2="726.1999999999999" y2="279" stroke="#1ae81a" stroke-width="1.4" />
<line x1="737.0" y1="279" x2="738.3" y2="279" stroke="#1ae81a" stroke-width="1.4" />
<line x1="739.2" y1="279" x2="740.5" y2="279" stroke="#1ae81a" stroke-width="1.4" />
<line x1="741.4" y1="279" x2="742.6999999999999" y2="279" stroke="#1ae81a" stroke-width="1.4" />
<line x1="758.0" y1="279" x2="759.3" y2="279" stroke="#1ae81a" stroke-width="1.4" />
<line x1="760.2" y1="279" x2="761.5" y2="279" stroke="#1ae81a" stroke-width="1.4" />
<line x1="762.4" y1="279" x2="763.6999999999999" y2="279" stroke="#1ae81a" stroke-width="1.4" />
<line x1="780.5" y1="279" x2="781.8" y2="279" stroke="#1ae81a" stroke-width="1.4" />
<line x1="782.7" y1="279" x2="784.0" y2="279" stroke="#1ae81a" stroke-width="1.4" />
<line x1="784.9" y1="279" x2="786.1999999999999" y2="279" stroke="#1ae81a" stroke-width="1.4" />
<line x1="808.0" y1="279" x2="809.3" y2="279" stroke="#1ae81a" stroke-width="1.4" />
<line x1="810.2" y1="279" x2="811.5" y2="279" stroke="#1ae81a" stroke-width="1.4" />
<line x1="812.4" y1="279" x2="813.6999999999999" y2="279" stroke="#1ae81a" stroke-width="1.4" />
<line x1="834.0" y1="279" x2="835.3" y2="279" stroke="#1ae81a" stroke-width="1.4" />
<line x1="836.2" y1="279" x2="837.5" y2="279" stroke="#1ae81a" stroke-width="1.4" />
<line x1="838.4" y1="279" x2="839.6999999999999" y2="279" stroke="#1ae81a" stroke-width="1.4" />
<line x1="849.5" y1="279" x2="850.8" y2="279" stroke="#1ae81a" stroke-width="1.4" />
<line x1="851.7" y1="279" x2="853.0" y2="279" stroke="#1ae81a" stroke-width="1.4" />
<line x1="853.9" y1="279" x2="855.1999999999999" y2="279" stroke="#1ae81a" stroke-width="1.4" />
<line x1="867.5" y1="279" x2="868.8" y2="279" stroke="#1ae81a" stroke-width="1.4" />
<line x1="869.7" y1="279" x2="871.0" y2="279" stroke="#1ae81a" stroke-width="1.4" />
<line x1="871.9" y1="279" x2="873.1999999999999" y2="279" stroke="#1ae81a" stroke-width="1.4" />
<line x1="887.0" y1="279" x2="888.3" y2="279" stroke="#1ae81a" stroke-width="1.4" />
<line x1="889.2" y1="279" x2="890.5" y2="279" stroke="#1ae81a" stroke-width="1.4" />
<line x1="891.4" y1="279" x2="892.6999999999999" y2="279" stroke="#1ae81a" stroke-width="1.4" />
<line x1="901.5" y1="279" x2="902.8" y2="279" stroke="#1ae81a" stroke-width="1.4" />
<line x1="903.7" y1="279" x2="905.0" y2="279" stroke="#1ae81a" stroke-width="1.4" />
<line x1="905.9" y1="279" x2="907.1999999999999" y2="279" stroke="#1ae81a" stroke-width="1.4" />
<line x1="919.0" y1="279" x2="920.3" y2="279" stroke="#1ae81a" stroke-width="1.4" />
<line x1="921.2" y1="279" x2="922.5" y2="279" stroke="#1ae81a" stroke-width="1.4" />
<line x1="923.4" y1="279" x2="924.6999999999999" y2="279" stroke="#1ae81a" stroke-width="1.4" />
<line x1="936.5" y1="279" x2="937.8" y2="279" stroke="#1ae81a" stroke-width="1.4" />
<line x1="938.7" y1="279" x2="940.0" y2="279" stroke="#1ae81a" stroke-width="1.4" />
<line x1="940.9" y1="279" x2="942.1999999999999" y2="279" stroke="#1ae81a" stroke-width="1.4" />
<line x1="951.5" y1="279" x2="952.8" y2="279" stroke="#1ae81a" stroke-width="1.4" />
<line x1="953.7" y1="279" x2="955.0" y2="279" stroke="#1ae81a" stroke-width="1.4" />
<line x1="955.9" y1="279" x2="957.1999999999999" y2="279" stroke="#1ae81a" stroke-width="1.4" />
<line x1="725.0" y1="265" x2="726.3" y2="265" stroke="#1ae81a" stroke-width="1.4" />
<line x1="727.2" y1="265" x2="728.5" y2="265" stroke="#1ae81a" stroke-width="1.4" />
<line x1="729.4" y1="265" x2="730.6999999999999" y2="265" stroke="#1ae81a" stroke-width="1.4" />
<line x1="485" y1="546.5" x2="977" y2="546.5" stroke="#1ae81a" stroke-width="1.2" />
<line x1="485" y1="553.5" x2="977" y2="553.5" stroke="#1ae81a" stroke-width="1.2" />
<line x1="485" y1="560.5" x2="977" y2="560.5" stroke="#1ae81a" stroke-width="1.2" />
<line x1="488.5" y1="538" x2="488.5" y2="564" stroke="#1ae81a" stroke-width="1" />
<line x1="543.5" y1="538" x2="543.5" y2="564" stroke="#1ae81a" stroke-width="1" />
<line x1="598.5" y1="538" x2="598.5" y2="564" stroke="#1ae81a" stroke-width="1" />
<line x1="653.5" y1="538" x2="653.5" y2="564" stroke="#1ae81a" stroke-width="1" />
<line x1="704.5" y1="538" x2="704.5" y2="564" stroke="#1ae81a" stroke-width="1" />
<line x1="758.5" y1="538" x2="758.5" y2="564" stroke="#1ae81a" stroke-width="1" />
<line x1="814.5" y1="538" x2="814.5" y2="564" stroke="#1ae81a" stroke-width="1" />
<line x1="869.5" y1="538" x2="869.5" y2="564" stroke="#1ae81a" stroke-width="1" />
<line x1="919.5" y1="538" x2="919.5" y2="564" stroke="#1ae81a" stroke-width="1" />
<line x1="974.5" y1="538" x2="974.5" y2="564" stroke="#1ae81a" stroke-width="1" />
<line x1="497.5" y1="538" x2="497.5" y2="549" stroke="#1ae81a" stroke-width="1" />
<line x1="507.5" y1="538" x2="507.5" y2="549" stroke="#1ae81a" stroke-width="1" />
<line x1="515.5" y1="538" x2="515.5" y2="549" stroke="#1ae81a" stroke-width="1" />
<line x1="521.5" y1="538" x2="521.5" y2="549" stroke="#1ae81a" stroke-width="1" />
<line x1="530.5" y1="538" x2="530.5" y2="549" stroke="#1ae81a" stroke-width="1" />
<line x1="555.5" y1="538" x2="555.5" y2="549" stroke="#1ae81a" stroke-width="1" />
<line x1="565.5" y1="538" x2="565.5" y2="549" stroke="#1ae81a" stroke-width="1" />
<line x1="575.5" y1="538" x2="575.5" y2="549" stroke="#1ae81a" stroke-width="1" />
<line x1="588.5" y1="538" x2="588.5" y2="549" stroke="#1ae81a" stroke-width="1" />
<line x1="608.5" y1="538" x2="608.5" y2="549" stroke="#1ae81a" stroke-width="1" />
<line x1="620.5" y1="538" x2="620.5" y2="549" stroke="#1ae81a" stroke-width="1" />
<line x1="632.5" y1="538" x2="632.5" y2="549" stroke="#1ae81a" stroke-width="1" />
<line x1="642.5" y1="538" x2="642.5" y2="549" stroke="#1ae81a" stroke-width="1" />
<line x1="665.5" y1="538" x2="665.5" y2="549" stroke="#1ae81a" stroke-width="1" />
<line x1="680.5" y1="538" x2="680.5" y2="549" stroke="#1ae81a" stroke-width="1" />
<line x1="690.5" y1="538" x2="690.5" y2="549" stroke="#1ae81a" stroke-width="1" />
<line x1="712.5" y1="538" x2="712.5" y2="549" stroke="#1ae81a" stroke-width="1" />
<line x1="731.5" y1="538" x2="731.5" y2="549" stroke="#1ae81a" stroke-width="1" />
<line x1="745.5" y1="538" x2="745.5" y2="549" stroke="#1ae81a" stroke-width="1" />
<line x1="752.5" y1="538" x2="752.5" y2="549" stroke="#1ae81a" stroke-width="1" />
<line x1="770.5" y1="538" x2="770.5" y2="549" stroke="#1ae81a" stroke-width="1" />
<line x1="790.5" y1="538" x2="790.5" y2="549" stroke="#1ae81a" stroke-width="1" />
<line x1="800.5" y1="538" x2="800.5" y2="549" stroke="#1ae81a" stroke-width="1" />
<line x1="822.5" y1="538" x2="822.5" y2="549" stroke="#1ae81a" stroke-width="1" />
<line x1="830.5" y1="538" x2="830.5" y2="549" stroke="#1ae81a" stroke-width="1" />
<line x1="845.5" y1="538" x2="845.5" y2="549" stroke="#1ae81a" stroke-width="1" />
<line x1="858.5" y1="538" x2="858.5" y2="549" stroke="#1ae81a" stroke-width="1" />
<line x1="880.5" y1="538" x2="880.5" y2="549" stroke="#1ae81a" stroke-width="1" />
<line x1="897.5" y1="538" x2="897.5" y2="549" stroke="#1ae81a" stroke-width="1" />
<line x1="912.5" y1="538" x2="912.5" y2="549" stroke="#1ae81a" stroke-width="1" />
<line x1="932.5" y1="538" x2="932.5" y2="549" stroke="#1ae81a" stroke-width="1" />
<line x1="947.5" y1="538" x2="947.5" y2="549" stroke="#1ae81a" stroke-width="1" />
<line x1="962.5" y1="538" x2="962.5" y2="549" stroke="#1ae81a" stroke-width="1" />
<line x1="499.0" y1="543" x2="500.3" y2="543" stroke="#1ae81a" stroke-width="1.4" />
<line x1="501.2" y1="543" x2="502.5" y2="543" stroke="#1ae81a" stroke-width="1.4" />
<line x1="503.4" y1="543" x2="504.7" y2="543" stroke="#1ae81a" stroke-width="1.4" />
<line x1="539.5" y1="543" x2="540.8" y2="543" stroke="#1ae81a" stroke-width="1.4" />
<line x1="541.7" y1="543" x2="543.0" y2="543" stroke="#1ae81a" stroke-width="1.4" />
<line x1="543.9" y1="543" x2="545.1999999999999" y2="543" stroke="#1ae81a" stroke-width="1.4" />
<line x1="557.0" y1="543" x2="558.3" y2="543" stroke="#1ae81a" stroke-width="1.4" />
<line x1="559.2" y1="543" x2="560.5" y2="543" stroke="#1ae81a" stroke-width="1.4" />
<line x1="561.4" y1="543" x2="562.6999999999999" y2="543" stroke="#1ae81a" stroke-width="1.4" />
<line x1="567.0" y1="543" x2="568.3" y2="543" stroke="#1ae81a" stroke-width="1.4" />
<line x1="569.2" y1="543" x2="570.5" y2="543" stroke="#1ae81a" stroke-width="1.4" />
<line x1="571.4" y1="543" x2="572.6999999999999" y2="543" stroke="#1ae81a" stroke-width="1.4" />
<line x1="578.5" y1="543" x2="579.8" y2="543" stroke="#1ae81a" stroke-width="1.4" />
<line x1="580.7" y1="543" x2="582.0" y2="543" stroke="#1ae81a" stroke-width="1.4" />
<line x1="582.9" y1="543" x2="584.1999999999999" y2="543" stroke="#1ae81a" stroke-width="1.4" />
<line x1="595.0" y1="543" x2="596.3" y2="543" stroke="#1ae81a" stroke-width="1.4" />
<line x1="597.2" y1="543" x2="598.5" y2="543" stroke="#1ae81a" stroke-width="1.4" />
<line x1="599.4" y1="543" x2="600.6999999999999" y2="543" stroke="#1ae81a" stroke-width="1.4" />
<line x1="611.0" y1="543" x2="612.3" y2="543" stroke="#1ae81a" stroke-width="1.4" />
<line x1="613.2" y1="543" x2="614.5" y2="543" stroke="#1ae81a" stroke-width="1.4" />
<line x1="615.4" y1="543" x2="616.6999999999999" y2="543" stroke="#1ae81a" stroke-width="1.4" />
<line x1="623.0" y1="543" x2="624.3" y2="543" stroke="#1ae81a" stroke-width="1.4" />
<line x1="625.2" y1="543" x2="626.5" y2="543" stroke="#1ae81a" stroke-width="1.4" />
<line x1="627.4" y1="543" x2="628.6999999999999" y2="543" stroke="#1ae81a" stroke-width="1.4" />
<line x1="634.0" y1="543" x2="635.3" y2="543" stroke="#1ae81a" stroke-width="1.4" />
<line x1="636.2" y1="543" x2="637.5" y2="543" stroke="#1ae81a" stroke-width="1.4" />
<line x1="638.4" y1="543" x2="639.6999999999999" y2="543" stroke="#1ae81a" stroke-width="1.4" />
<line x1="650.5" y1="543" x2="651.8" y2="543" stroke="#1ae81a" stroke-width="1.4" />
<line x1="652.7" y1="543" x2="654.0" y2="543" stroke="#1ae81a" stroke-width="1.4" />
<line x1="654.9" y1="543" x2="656.1999999999999" y2="543" stroke="#1ae81a" stroke-width="1.4" />
<line x1="669.5" y1="543" x2="670.8" y2="543" stroke="#1ae81a" stroke-width="1.4" />
<line x1="671.7" y1="543" x2="673.0" y2="543" stroke="#1ae81a" stroke-width="1.4" />
<line x1="673.9" y1="543" x2="675.1999999999999" y2="543" stroke="#1ae81a" stroke-width="1.4" />
<line x1="682.0" y1="543" x2="683.3" y2="543" stroke="#1ae81a" stroke-width="1.4" />
<line x1="684.2" y1="543" x2="685.5" y2="543" stroke="#1ae81a" stroke-width="1.4" />
<line x1="686.4" y1="543" x2="687.6999999999999" y2="543" stroke="#1ae81a" stroke-width="1.4" />
<line x1="698.0" y1="543" x2="699.3" y2="543" stroke="#1ae81a" stroke-width="1.4" />
<line x1="700.2" y1="543" x2="701.5" y2="543" stroke="#1ae81a" stroke-width="1.4" />
<line x1="702.4" y1="543" x2="703.6999999999999" y2="543" stroke="#1ae81a" stroke-width="1.4" />
<line x1="718.5" y1="543" x2="719.8" y2="543" stroke="#1ae81a" stroke-width="1.4" />
<line x1="720.7" y1="543" x2="722.0" y2="543" stroke="#1ae81a" stroke-width="1.4" />
<line x1="722.9" y1="543" x2="724.1999999999999" y2="543" stroke="#1ae81a" stroke-width="1.4" />
<line x1="735.0" y1="543" x2="736.3" y2="543" stroke="#1ae81a" stroke-width="1.4" />
<line x1="737.2" y1="543" x2="738.5" y2="543" stroke="#1ae81a" stroke-width="1.4" />
<line x1="739.4" y1="543" x2="740.6999999999999" y2="543" stroke="#1ae81a" stroke-width="1.4" />
<line x1="758.0" y1="543" x2="759.3" y2="543" stroke="#1ae81a" stroke-width="1.4" />
<line x1="760.2" y1="543" x2="761.5" y2="543" stroke="#1ae81a" stroke-width="1.4" />
<line x1="762.4" y1="543" x2="763.6999999999999" y2="543" stroke="#1ae81a" stroke-width="1.4" />
<line x1="777.0" y1="543" x2="778.3" y2="543" stroke="#1ae81a" stroke-width="1.4" />
<line x1="779.2" y1="543" x2="780.5" y2="543" stroke="#1ae81a" stroke-width="1.4" />
<line x1="781.4" y1="543" x2="782.6999999999999" y2="543" stroke="#1ae81a" stroke-width="1.4" />
<line x1="792.0" y1="543" x2="793.3" y2="543" stroke="#1ae81a" stroke-width="1.4" />
<line x1="794.2" y1="543" x2="795.5" y2="543" stroke="#1ae81a" stroke-width="1.4" />
<line x1="796.4" y1="543" x2="797.6999999999999" y2="543" stroke="#1ae81a" stroke-width="1.4" />
<line x1="808.0" y1="543" x2="809.3" y2="543" stroke="#1ae81a" stroke-width="1.4" />
<line x1="810.2" y1="543" x2="811.5" y2="543" stroke="#1ae81a" stroke-width="1.4" />
<line x1="812.4" y1="543" x2="813.6999999999999" y2="543" stroke="#1ae81a" stroke-width="1.4" />
<line x1="834.5" y1="543" x2="835.8" y2="543" stroke="#1ae81a" stroke-width="1.4" />
<line x1="836.7" y1="543" x2="838.0" y2="543" stroke="#1ae81a" stroke-width="1.4" />
<line x1="838.9" y1="543" x2="840.1999999999999" y2="543" stroke="#1ae81a" stroke-width="1.4" />
<line x1="848.5" y1="543" x2="849.8" y2="543" stroke="#1ae81a" stroke-width="1.4" />
<line x1="850.7" y1="543" x2="852.0" y2="543" stroke="#1ae81a" stroke-width="1.4" />
<line x1="852.9" y1="543" x2="854.1999999999999" y2="543" stroke="#1ae81a" stroke-width="1.4" />
<line x1="866.0" y1="543" x2="867.3" y2="543" stroke="#1ae81a" stroke-width="1.4" />
<line x1="868.2" y1="543" x2="869.5" y2="543" stroke="#1ae81a" stroke-width="1.4" />
<line x1="870.4" y1="543" x2="871.6999999999999" y2="543" stroke="#1ae81a" stroke-width="1.4" />
<line x1="885.5" y1="543" x2="886.8" y2="543" stroke="#1ae81a" stroke-width="1.4" />
<line x1="887.7" y1="543" x2="889.0" y2="543" stroke="#1ae81a" stroke-width="1.4" />
<line x1="889.9" y1="543" x2="891.1999999999999" y2="543" stroke="#1ae81a" stroke-width="1.4" />
<line x1="901.5" y1="543" x2="902.8" y2="543" stroke="#1ae81a" stroke-width="1.4" />
<line x1="903.7" y1="543" x2="905.0" y2="543" stroke="#1ae81a" stroke-width="1.4" />
<line x1="905.9" y1="543" x2="907.1999999999999" y2="543" stroke="#1ae81a" stroke-width="1.4" />
<line x1="919.0" y1="543" x2="920.3" y2="543" stroke="#1ae81a" stroke-width="1.4" />
<line x1="921.2" y1="543" x2="922.5" y2="543" stroke="#1ae81a" stroke-width="1.4" />
<line x1="923.4" y1="543" x2="924.6999999999999" y2="543" stroke="#1ae81a" stroke-width="1.4" />
<line x1="936.5" y1="543" x2="937.8" y2="543" stroke="#1ae81a" stroke-width="1.4" />
<line x1="938.7" y1="543" x2="940.0" y2="543" stroke="#1ae81a" stroke-width="1.4" />
<line x1="940.9" y1="543" x2="942.1999999999999" y2="543" stroke="#1ae81a" stroke-width="1.4" />
<line x1="951.5" y1="543" x2="952.8" y2="543" stroke="#1ae81a" stroke-width="1.4" />
<line x1="953.7" y1="543" x2="955.0" y2="543" stroke="#1ae81a" stroke-width="1.4" />
<line x1="955.9" y1="543" x2="957.1999999999999" y2="543" stroke="#1ae81a" stroke-width="1.4" />
<line x1="513.05" y1="550" x2="514.3499999999999" y2="550" stroke="#1ae81a" stroke-width="1.4" />
<line x1="515.25" y1="550" x2="516.55" y2="550" stroke="#1ae81a" stroke-width="1.4" />
<line x1="517.4499999999999" y1="550" x2="518.7499999999999" y2="550" stroke="#1ae81a" stroke-width="1.4" />
<line x1="568.25" y1="550" x2="569.55" y2="550" stroke="#1ae81a" stroke-width="1.4" />
<line x1="570.45" y1="550" x2="571.75" y2="550" stroke="#1ae81a" stroke-width="1.4" />
<line x1="572.65" y1="550" x2="573.9499999999999" y2="550" stroke="#1ae81a" stroke-width="1.4" />
<line x1="623.2" y1="550" x2="624.5" y2="550" stroke="#1ae81a" stroke-width="1.4" />
<line x1="625.4000000000001" y1="550" x2="626.7" y2="550" stroke="#1ae81a" stroke-width="1.4" />
<line x1="627.6" y1="550" x2="628.9" y2="550" stroke="#1ae81a" stroke-width="1.4" />
<line x1="675.75" y1="550" x2="677.05" y2="550" stroke="#1ae81a" stroke-width="1.4" />
<line x1="677.95" y1="550" x2="679.25" y2="550" stroke="#1ae81a" stroke-width="1.4" />
<line x1="680.15" y1="550" x2="681.4499999999999" y2="550" stroke="#1ae81a" stroke-width="1.4" />
<line x1="728.3" y1="550" x2="729.5999999999999" y2="550" stroke="#1ae81a" stroke-width="1.4" />
<line x1="730.5" y1="550" x2="731.8" y2="550" stroke="#1ae81a" stroke-width="1.4" />
<line x1="732.6999999999999" y1="550" x2="733.9999999999999" y2="550" stroke="#1ae81a" stroke-width="1.4" />
<line x1="783.3" y1="550" x2="784.5999999999999" y2="550" stroke="#1ae81a" stroke-width="1.4" />
<line x1="785.5" y1="550" x2="786.8" y2="550" stroke="#1ae81a" stroke-width="1.4" />
<line x1="787.6999999999999" y1="550" x2="788.9999999999999" y2="550" stroke="#1ae81a" stroke-width="1.4" />
<line x1="838.5" y1="550" x2="839.8" y2="550" stroke="#1ae81a" stroke-width="1.4" />
<line x1="840.7" y1="550" x2="842.0" y2="550" stroke="#1ae81a" stroke-width="1.4" />
<line x1="842.9" y1="550" x2="844.1999999999999" y2="550" stroke="#1ae81a" stroke-width="1.4" />
<line x1="891.2" y1="550" x2="892.5" y2="550" stroke="#1ae81a" stroke-width="1.4" />
<line x1="893.4000000000001" y1="550" x2="894.7" y2="550" stroke="#1ae81a" stroke-width="1.4" />
<line x1="895.6" y1="550" x2="896.9" y2="550" stroke="#1ae81a" stroke-width="1.4" />
<line x1="943.8499999999999" y1="550" x2="945.1499999999999" y2="550" stroke="#1ae81a" stroke-width="1.4" />
<line x1="946.05" y1="550" x2="947.3499999999999" y2="550" stroke="#1ae81a" stroke-width="1.4" />
<line x1="948.2499999999999" y1="550" x2="949.5499999999998" y2="550" stroke="#1ae81a" stroke-width="1.4" />
<line x1="726.0" y1="557" x2="727.3" y2="557" stroke="#1ae81a" stroke-width="1.4" />
<line x1="728.2" y1="557" x2="729.5" y2="557" stroke="#1ae81a" stroke-width="1.4" />
<line x1="730.4" y1="557" x2="731.6999999999999" y2="557" stroke="#1ae81a" stroke-width="1.4" />
<line x1="441.5" y1="318" x2="441.5" y2="451" stroke="#1ae81a" stroke-width="1.2" />
<line x1="447.5" y1="318" x2="447.5" y2="451" stroke="#1ae81a" stroke-width="1.2" />
<line x1="455.5" y1="318" x2="455.5" y2="451" stroke="#1ae81a" stroke-width="1.2" />
<line x1="436" y1="318.5" x2="462" y2="318.5" stroke="#1ae81a" stroke-width="1" />
<line x1="436" y1="451.5" x2="462" y2="451.5" stroke="#1ae81a" stroke-width="1" />
<line x1="437" y1="320.5" x2="462" y2="320.5" stroke="#1ae81a" stroke-width="1" />
<line x1="437" y1="367.5" x2="462" y2="367.5" stroke="#1ae81a" stroke-width="1" />
<line x1="437" y1="387.5" x2="462" y2="387.5" stroke="#1ae81a" stroke-width="1" />
<line x1="437" y1="436.5" x2="462" y2="436.5" stroke="#1ae81a" stroke-width="1" />
<line x1="437" y1="449.5" x2="462" y2="449.5" stroke="#1ae81a" stroke-width="1" />
<line x1="465.5" y1="345" x2="465.5" y2="394" stroke="#1ae81a" stroke-width="1" />
<line x1="455" y1="346.5" x2="470" y2="346.5" stroke="#1ae81a" stroke-width="0.9" />
<line x1="455" y1="352.5" x2="470" y2="352.5" stroke="#1ae81a" stroke-width="0.9" />
<line x1="447" y1="367.5" x2="470" y2="367.5" stroke="#1ae81a" stroke-width="0.9" />
<line x1="455" y1="372.5" x2="470" y2="372.5" stroke="#1ae81a" stroke-width="0.9" />
<line x1="455" y1="384.5" x2="470" y2="384.5" stroke="#1ae81a" stroke-width="0.9" />
<line x1="447" y1="388.5" x2="470" y2="388.5" stroke="#1ae81a" stroke-width="0.9" />
<line x1="455" y1="394.5" x2="470" y2="394.5" stroke="#1ae81a" stroke-width="0.9" />
<line x1="451.5" y1="338.0" x2="451.5" y2="339.3" stroke="#1ae81a" stroke-width="1.3" />
<line x1="451.5" y1="340.2" x2="451.5" y2="341.5" stroke="#1ae81a" stroke-width="1.3" />
<line x1="451.5" y1="342.4" x2="451.5" y2="343.7" stroke="#1ae81a" stroke-width="1.3" />
<line x1="451.5" y1="372.0" x2="451.5" y2="373.3" stroke="#1ae81a" stroke-width="1.3" />
<line x1="451.5" y1="374.2" x2="451.5" y2="375.5" stroke="#1ae81a" stroke-width="1.3" />
<line x1="451.5" y1="376.4" x2="451.5" y2="377.7" stroke="#1ae81a" stroke-width="1.3" />
<line x1="451.5" y1="420.0" x2="451.5" y2="421.3" stroke="#1ae81a" stroke-width="1.3" />
<line x1="451.5" y1="422.2" x2="451.5" y2="423.5" stroke="#1ae81a" stroke-width="1.3" />
<line x1="451.5" y1="424.4" x2="451.5" y2="425.7" stroke="#1ae81a" stroke-width="1.3" />
<line x1="451.5" y1="445.0" x2="451.5" y2="446.3" stroke="#1ae81a" stroke-width="1.3" />
<line x1="451.5" y1="447.2" x2="451.5" y2="448.5" stroke="#1ae81a" stroke-width="1.3" />
<line x1="451.5" y1="449.4" x2="451.5" y2="450.7" stroke="#1ae81a" stroke-width="1.3" />
<line x1="444.5" y1="330.0" x2="444.5" y2="331.3" stroke="#1ae81a" stroke-width="1.3" />
<line x1="444.5" y1="332.2" x2="444.5" y2="333.5" stroke="#1ae81a" stroke-width="1.3" />
<line x1="444.5" y1="334.4" x2="444.5" y2="335.7" stroke="#1ae81a" stroke-width="1.3" />
<line x1="444.5" y1="382.0" x2="444.5" y2="383.3" stroke="#1ae81a" stroke-width="1.3" />
<line x1="444.5" y1="384.2" x2="444.5" y2="385.5" stroke="#1ae81a" stroke-width="1.3" />
<line x1="444.5" y1="386.4" x2="444.5" y2="387.7" stroke="#1ae81a" stroke-width="1.3" />
<line x1="444.5" y1="428.0" x2="444.5" y2="429.3" stroke="#1ae81a" stroke-width="1.3" />
<line x1="444.5" y1="430.2" x2="444.5" y2="431.5" stroke="#1ae81a" stroke-width="1.3" />
<line x1="444.5" y1="432.4" x2="444.5" y2="433.7" stroke="#1ae81a" stroke-width="1.3" />
<line x1="460.5" y1="348.0" x2="460.5" y2="349.3" stroke="#1ae81a" stroke-width="1.3" />
<line x1="460.5" y1="350.2" x2="460.5" y2="351.5" stroke="#1ae81a" stroke-width="1.3" />
<line x1="460.5" y1="352.4" x2="460.5" y2="353.7" stroke="#1ae81a" stroke-width="1.3" />
<line x1="460.5" y1="375.0" x2="460.5" y2="376.3" stroke="#1ae81a" stroke-width="1.3" />
<line x1="460.5" y1="377.2" x2="460.5" y2="378.5" stroke="#1ae81a" stroke-width="1.3" />
<line x1="460.5" y1="379.4" x2="460.5" y2="380.7" stroke="#1ae81a" stroke-width="1.3" />
<line x1="1020.5" y1="318" x2="1020.5" y2="451" stroke="#1ae81a" stroke-width="1.2" />
<line x1="1028.5" y1="318" x2="1028.5" y2="451" stroke="#1ae81a" stroke-width="1.2" />
<line x1="1012" y1="318.5" x2="1032" y2="318.5" stroke="#1ae81a" stroke-width="1" />
<line x1="1012" y1="451.5" x2="1032" y2="451.5" stroke="#1ae81a" stroke-width="1" />
<line x1="1008" y1="320.5" x2="1032" y2="320.5" stroke="#1ae81a" stroke-width="1" />
<line x1="1008" y1="367.5" x2="1032" y2="367.5" stroke="#1ae81a" stroke-width="1" />
<line x1="1008" y1="387.5" x2="1032" y2="387.5" stroke="#1ae81a" stroke-width="1" />
<line x1="1008" y1="436.5" x2="1032" y2="436.5" stroke="#1ae81a" stroke-width="1" />
<line x1="1008" y1="449.5" x2="1032" y2="449.5" stroke="#1ae81a" stroke-width="1" />
<line x1="1014.5" y1="366" x2="1014.5" y2="388" stroke="#1ae81a" stroke-width="1" />
<line x1="1005" y1="367.5" x2="1020" y2="367.5" stroke="#1ae81a" stroke-width="0.9" />
<line x1="1005" y1="372.5" x2="1020" y2="372.5" stroke="#1ae81a" stroke-width="0.9" />
<line x1="1005" y1="384.5" x2="1020" y2="384.5" stroke="#1ae81a" stroke-width="0.9" />
<line x1="1005" y1="388.5" x2="1020" y2="388.5" stroke="#1ae81a" stroke-width="0.9" />
<line x1="1017.5" y1="340.0" x2="1017.5" y2="341.3" stroke="#1ae81a" stroke-width="1.3" />
<line x1="1017.5" y1="342.2" x2="1017.5" y2="343.5" stroke="#1ae81a" stroke-width="1.3" />
<line x1="1017.5" y1="344.4" x2="1017.5" y2="345.7" stroke="#1ae81a" stroke-width="1.3" />
<line x1="1017.5" y1="405.0" x2="1017.5" y2="406.3" stroke="#1ae81a" stroke-width="1.3" />
<line x1="1017.5" y1="407.2" x2="1017.5" y2="408.5" stroke="#1ae81a" stroke-width="1.3" />
<line x1="1017.5" y1="409.4" x2="1017.5" y2="410.7" stroke="#1ae81a" stroke-width="1.3" />
<line x1="1017.5" y1="440.0" x2="1017.5" y2="441.3" stroke="#1ae81a" stroke-width="1.3" />
<line x1="1017.5" y1="442.2" x2="1017.5" y2="443.5" stroke="#1ae81a" stroke-width="1.3" />
<line x1="1017.5" y1="444.4" x2="1017.5" y2="445.7" stroke="#1ae81a" stroke-width="1.3" />
<line x1="1010.5" y1="372.0" x2="1010.5" y2="373.3" stroke="#1ae81a" stroke-width="1.3" />
<line x1="1010.5" y1="374.2" x2="1010.5" y2="375.5" stroke="#1ae81a" stroke-width="1.3" />
<line x1="1010.5" y1="376.4" x2="1010.5" y2="377.7" stroke="#1ae81a" stroke-width="1.3" />
<line x1="1024.5" y1="372.0" x2="1024.5" y2="373.3" stroke="#1ae81a" stroke-width="1.3" />
<line x1="1024.5" y1="374.2" x2="1024.5" y2="375.5" stroke="#1ae81a" stroke-width="1.3" />
<line x1="1024.5" y1="376.4" x2="1024.5" y2="377.7" stroke="#1ae81a" stroke-width="1.3" />
<circle cx="488.5" cy="257" r="3.8" stroke="#f0f0f0" stroke-width="1.3" fill="#000"/>
<path d="M487.0 254.5 a3 3 0 0 0 0 5" stroke="#f0f0f0" stroke-width="1" fill="none"/>
<circle cx="511.6" cy="257" r="3.8" stroke="#f0f0f0" stroke-width="1.3" fill="#000"/>
<path d="M510.1 254.5 a3 3 0 0 0 0 5" stroke="#f0f0f0" stroke-width="1" fill="none"/>
<circle cx="543.6" cy="257" r="3.8" stroke="#f0f0f0" stroke-width="1.3" fill="#000"/>
<path d="M542.1 254.5 a3 3 0 0 0 0 5" stroke="#f0f0f0" stroke-width="1" fill="none"/>
<circle cx="598.9" cy="257" r="3.8" stroke="#f0f0f0" stroke-width="1.3" fill="#000"/>
<path d="M597.4 254.5 a3 3 0 0 0 0 5" stroke="#f0f0f0" stroke-width="1" fill="none"/>
<circle cx="653.5" cy="257" r="3.8" stroke="#f0f0f0" stroke-width="1.3" fill="#000"/>
<path d="M652.0 254.5 a3 3 0 0 0 0 5" stroke="#f0f0f0" stroke-width="1" fill="none"/>
<circle cx="704" cy="257" r="3.8" stroke="#f0f0f0" stroke-width="1.3" fill="#000"/>
<path d="M702.5 254.5 a3 3 0 0 0 0 5" stroke="#f0f0f0" stroke-width="1" fill="none"/>
<circle cx="739.7" cy="257" r="3.8" stroke="#f0f0f0" stroke-width="1.3" fill="#000"/>
<path d="M738.2 254.5 a3 3 0 0 0 0 5" stroke="#f0f0f0" stroke-width="1" fill="none"/>
<circle cx="758.6" cy="257" r="3.8" stroke="#f0f0f0" stroke-width="1.3" fill="#000"/>
<path d="M757.1 254.5 a3 3 0 0 0 0 5" stroke="#f0f0f0" stroke-width="1" fill="none"/>
<circle cx="814" cy="257" r="3.8" stroke="#f0f0f0" stroke-width="1.3" fill="#000"/>
<path d="M812.5 254.5 a3 3 0 0 0 0 5" stroke="#f0f0f0" stroke-width="1" fill="none"/>
<circle cx="834.3" cy="257" r="3.8" stroke="#f0f0f0" stroke-width="1.3" fill="#000"/>
<path d="M832.8 254.5 a3 3 0 0 0 0 5" stroke="#f0f0f0" stroke-width="1" fill="none"/>
<circle cx="869" cy="257" r="3.8" stroke="#f0f0f0" stroke-width="1.3" fill="#000"/>
<path d="M867.5 254.5 a3 3 0 0 0 0 5" stroke="#f0f0f0" stroke-width="1" fill="none"/>
<circle cx="919.4" cy="257" r="3.8" stroke="#f0f0f0" stroke-width="1.3" fill="#000"/>
<path d="M917.9 254.5 a3 3 0 0 0 0 5" stroke="#f0f0f0" stroke-width="1" fill="none"/>
<circle cx="974.3" cy="257" r="3.8" stroke="#f0f0f0" stroke-width="1.3" fill="#000"/>
<path d="M972.8 254.5 a3 3 0 0 0 0 5" stroke="#f0f0f0" stroke-width="1" fill="none"/>
<circle cx="488.5" cy="570.6" r="3.8" stroke="#f0f0f0" stroke-width="1.3" fill="#000"/>
<path d="M487.0 568.1 a3 3 0 0 0 0 5" stroke="#f0f0f0" stroke-width="1" fill="none"/>
<circle cx="543.6" cy="570.6" r="3.8" stroke="#f0f0f0" stroke-width="1.3" fill="#000"/>
<path d="M542.1 568.1 a3 3 0 0 0 0 5" stroke="#f0f0f0" stroke-width="1" fill="none"/>
<circle cx="598.9" cy="570.6" r="3.8" stroke="#f0f0f0" stroke-width="1.3" fill="#000"/>
<path d="M597.4 568.1 a3 3 0 0 0 0 5" stroke="#f0f0f0" stroke-width="1" fill="none"/>
<circle cx="653.5" cy="570.6" r="3.8" stroke="#f0f0f0" stroke-width="1.3" fill="#000"/>
<path d="M652.0 568.1 a3 3 0 0 0 0 5" stroke="#f0f0f0" stroke-width="1" fill="none"/>
<circle cx="704" cy="570.6" r="3.8" stroke="#f0f0f0" stroke-width="1.3" fill="#000"/>
<path d="M702.5 568.1 a3 3 0 0 0 0 5" stroke="#f0f0f0" stroke-width="1" fill="none"/>
<circle cx="758.6" cy="570.6" r="3.8" stroke="#f0f0f0" stroke-width="1.3" fill="#000"/>
<path d="M757.1 568.1 a3 3 0 0 0 0 5" stroke="#f0f0f0" stroke-width="1" fill="none"/>
<circle cx="814" cy="570.6" r="3.8" stroke="#f0f0f0" stroke-width="1.3" fill="#000"/>
<path d="M812.5 568.1 a3 3 0 0 0 0 5" stroke="#f0f0f0" stroke-width="1" fill="none"/>
<circle cx="869" cy="570.6" r="3.8" stroke="#f0f0f0" stroke-width="1.3" fill="#000"/>
<path d="M867.5 568.1 a3 3 0 0 0 0 5" stroke="#f0f0f0" stroke-width="1" fill="none"/>
<circle cx="919.4" cy="570.6" r="3.8" stroke="#f0f0f0" stroke-width="1.3" fill="#000"/>
<path d="M917.9 568.1 a3 3 0 0 0 0 5" stroke="#f0f0f0" stroke-width="1" fill="none"/>
<circle cx="974.3" cy="570.6" r="3.8" stroke="#f0f0f0" stroke-width="1.3" fill="#000"/>
<path d="M972.8 568.1 a3 3 0 0 0 0 5" stroke="#f0f0f0" stroke-width="1" fill="none"/>
<circle cx="428" cy="320.5" r="3.8" stroke="#f0f0f0" stroke-width="1.3" fill="#000"/>
<path d="M426.5 318.0 a3 3 0 0 0 0 5" stroke="#f0f0f0" stroke-width="1" fill="none"/>
<circle cx="1036" cy="320.5" r="3.8" stroke="#f0f0f0" stroke-width="1.3" fill="#000"/>
<path d="M1034.5 318.0 a3 3 0 0 0 0 5" stroke="#f0f0f0" stroke-width="1" fill="none"/>
<circle cx="428" cy="367.2" r="3.8" stroke="#f0f0f0" stroke-width="1.3" fill="#000"/>
<path d="M426.5 364.7 a3 3 0 0 0 0 5" stroke="#f0f0f0" stroke-width="1" fill="none"/>
<circle cx="1036" cy="367.2" r="3.8" stroke="#f0f0f0" stroke-width="1.3" fill="#000"/>
<path d="M1034.5 364.7 a3 3 0 0 0 0 5" stroke="#f0f0f0" stroke-width="1" fill="none"/>
<circle cx="428" cy="387.2" r="3.8" stroke="#f0f0f0" stroke-width="1.3" fill="#000"/>
<path d="M426.5 384.7 a3 3 0 0 0 0 5" stroke="#f0f0f0" stroke-width="1" fill="none"/>
<circle cx="1036" cy="387.2" r="3.8" stroke="#f0f0f0" stroke-width="1.3" fill="#000"/>
<path d="M1034.5 384.7 a3 3 0 0 0 0 5" stroke="#f0f0f0" stroke-width="1" fill="none"/>
<circle cx="428" cy="436.7" r="3.8" stroke="#f0f0f0" stroke-width="1.3" fill="#000"/>
<path d="M426.5 434.2 a3 3 0 0 0 0 5" stroke="#f0f0f0" stroke-width="1" fill="none"/>
<circle cx="1036" cy="436.7" r="3.8" stroke="#f0f0f0" stroke-width="1.3" fill="#000"/>
<path d="M1034.5 434.2 a3 3 0 0 0 0 5" stroke="#f0f0f0" stroke-width="1" fill="none"/>
<circle cx="428" cy="449.2" r="3.8" stroke="#f0f0f0" stroke-width="1.3" fill="#000"/>
<path d="M426.5 446.7 a3 3 0 0 0 0 5" stroke="#f0f0f0" stroke-width="1" fill="none"/>
<circle cx="1036" cy="449.2" r="3.8" stroke="#f0f0f0" stroke-width="1.3" fill="#000"/>
<path d="M1034.5 446.7 a3 3 0 0 0 0 5" stroke="#f0f0f0" stroke-width="1" fill="none"/>
<circle cx="728" cy="239" r="5" stroke="#f0f0f0" stroke-width="1.1" fill="#000"/>
<circle cx="728" cy="239" r="0.8" fill="#f0f0f0"/>
<line x1="725" y1="244" x2="728" y2="248" stroke="#f0f0f0" stroke-width="1" />
<line x1="731" y1="244" x2="728" y2="248" stroke="#f0f0f0" stroke-width="1" />
<circle cx="728" cy="591" r="5" stroke="#f0f0f0" stroke-width="1.1" fill="#000"/>
<circle cx="728" cy="591" r="0.8" fill="#f0f0f0"/>
<line x1="728.5" y1="584" x2="728.5" y2="586" stroke="#f0f0f0" stroke-width="1" />
<circle cx="409" cy="388" r="5" stroke="#f0f0f0" stroke-width="1.1" fill="#000"/>
<circle cx="409" cy="388" r="0.8" fill="#f0f0f0"/>
<line x1="402" y1="388.5" x2="403" y2="388.5" stroke="#f0f0f0" stroke-width="1" />
<circle cx="1061" cy="388" r="5" stroke="#f0f0f0" stroke-width="1.1" fill="#000"/>
<circle cx="1061" cy="388" r="0.8" fill="#f0f0f0"/>
<line x1="1054" y1="388.5" x2="1055" y2="388.5" stroke="#f0f0f0" stroke-width="1" />
<path d="M478.6 451.6 V312.5 H552.5 V358.7 H694.5 V312.2 H879 V359 H983.5 V453.4 H877 V469 H843 V465 H821 M752 465 H731 V469 H694.5 V453 H478.6" stroke="#f0f0f0" stroke-width="1.1" fill="none" />
<path d="M478.6 345.7 H469.2 V393.7 H478.6" stroke="#f0f0f0" stroke-width="1.1" fill="none" />
<path d="M478.6 348.5 H471.8 V391 H478.6" stroke="#f0f0f0" stroke-width="0.8" fill="none" />
<path d="M478.6 351 H474.5 V388.5 H478.6" stroke="#f0f0f0" stroke-width="0.7" fill="none" />
<line x1="478.6" y1="312.5" x2="486.5" y2="319.8" stroke="#f0f0f0" stroke-width="0.9" />
<line x1="552.5" y1="312.5" x2="543.6" y2="319.8" stroke="#f0f0f0" stroke-width="0.9" />
<line x1="552.5" y1="358.7" x2="543.6" y2="367" stroke="#f0f0f0" stroke-width="0.9" />
<line x1="694.5" y1="312.2" x2="702.4" y2="319.6" stroke="#f0f0f0" stroke-width="0.9" />
<line x1="879" y1="312.2" x2="870" y2="319.6" stroke="#f0f0f0" stroke-width="0.9" />
<line x1="879" y1="359" x2="870" y2="367" stroke="#f0f0f0" stroke-width="0.9" />
<line x1="983.5" y1="359" x2="975" y2="367" stroke="#f0f0f0" stroke-width="0.9" />
<line x1="983.5" y1="453.4" x2="975" y2="438" stroke="#f0f0f0" stroke-width="0.9" />
<line x1="478.6" y1="451.6" x2="486.5" y2="438" stroke="#f0f0f0" stroke-width="0.9" />
<line x1="694.5" y1="358.7" x2="702.4" y2="367" stroke="#f0f0f0" stroke-width="0.9" />
<path d="M483 449 V316 H549" stroke="#f0f0f0" stroke-width="0.7" fill="none" />
<path d="M558 362 H691 M882 362 H980 V449" stroke="#f0f0f0" stroke-width="0.7" fill="none" />
<rect x="485.3" y="319.8" width="2.4" height="118.19999999999999" fill="#c84848" stroke="#f0f0f0" stroke-width="0.75"/>
<rect x="486.5" y="318.6" width="57.10000000000002" height="2.4" fill="#c84848" stroke="#f0f0f0" stroke-width="0.75"/>
<rect x="542.4" y="319.8" width="2.4" height="47.19999999999999" fill="#c84848" stroke="#f0f0f0" stroke-width="0.75"/>
<rect x="510.40000000000003" y="319.8" width="2.4" height="47.19999999999999" fill="#c84848" stroke="#f0f0f0" stroke-width="0.75"/>
<rect x="486.5" y="366.3" width="215.89999999999998" height="2.4" fill="#c84848" stroke="#f0f0f0" stroke-width="0.75"/>
<rect x="870" y="366.3" width="105" height="2.4" fill="#c84848" stroke="#f0f0f0" stroke-width="0.75"/>
<rect x="486.5" y="386.8" width="216.5" height="2.4" fill="#c84848" stroke="#f0f0f0" stroke-width="0.75"/>
<rect x="870" y="386.8" width="105" height="2.4" fill="#c84848" stroke="#f0f0f0" stroke-width="0.75"/>
<rect x="486.5" y="436.8" width="216.5" height="2.4" fill="#c84848" stroke="#f0f0f0" stroke-width="0.75"/>
<rect x="870" y="436.8" width="105" height="2.4" fill="#c84848" stroke="#f0f0f0" stroke-width="0.75"/>
<rect x="973.8" y="367.5" width="2.4" height="70.5" fill="#c84848" stroke="#f0f0f0" stroke-width="0.75"/>
<rect x="542.4" y="388" width="2.4" height="50" fill="#c84848" stroke="#f0f0f0" stroke-width="0.75"/>
<rect x="597.6999999999999" y="388" width="2.4" height="50" fill="#c84848" stroke="#f0f0f0" stroke-width="0.75"/>
<rect x="652.3" y="388" width="2.4" height="50" fill="#c84848" stroke="#f0f0f0" stroke-width="0.75"/>
<rect x="918.1999999999999" y="388" width="2.4" height="50" fill="#c84848" stroke="#f0f0f0" stroke-width="0.75"/>
<rect x="701.8" y="388" width="2.4" height="50" fill="#c84848" stroke="#f0f0f0" stroke-width="0.75"/>
<rect x="868.8" y="388" width="2.4" height="50" fill="#c84848" stroke="#f0f0f0" stroke-width="0.75"/>
<rect x="702.4" y="318.40000000000003" width="167.60000000000002" height="2.4" fill="#c84848" stroke="#f0f0f0" stroke-width="0.75"/>
<rect x="701.1999999999999" y="319.6" width="2.4" height="47.89999999999998" fill="#c84848" stroke="#f0f0f0" stroke-width="0.75"/>
<rect x="868.8" y="319.6" width="2.4" height="47.89999999999998" fill="#c84848" stroke="#f0f0f0" stroke-width="0.75"/>
<rect x="757.4" y="319.6" width="2.4" height="47.89999999999998" fill="#c84848" stroke="#f0f0f0" stroke-width="0.75"/>
<rect x="812.8" y="319.6" width="2.4" height="47.89999999999998" fill="#c84848" stroke="#f0f0f0" stroke-width="0.75"/>
<rect x="702.4" y="341.3" width="36.60000000000002" height="2.4" fill="#c84848" stroke="#f0f0f0" stroke-width="0.75"/>
<rect x="738.5" y="319.6" width="2.4" height="47.89999999999998" fill="#c84848" stroke="#f0f0f0" stroke-width="0.75"/>
<rect x="814" y="339.2" width="20" height="2.4" fill="#c84848" stroke="#f0f0f0" stroke-width="0.75"/>
<rect x="814" y="350.3" width="20" height="2.4" fill="#c84848" stroke="#f0f0f0" stroke-width="0.75"/>
<rect x="833.0999999999999" y="319.6" width="2.4" height="47.89999999999998" fill="#c84848" stroke="#f0f0f0" stroke-width="0.75"/>
<rect x="703" y="447.8" width="19" height="2.4" fill="#c84848" stroke="#f0f0f0" stroke-width="0.75"/>
<rect x="851" y="447.8" width="19" height="2.4" fill="#c84848" stroke="#f0f0f0" stroke-width="0.75"/>
<line x1="488.5" y1="261.5" x2="488.5" y2="566" stroke="#c81818" stroke-width="1.5" stroke-dasharray="12 2.5 2 2.5" stroke-opacity="0.8"/>
<line x1="511.6" y1="261.5" x2="511.6" y2="452" stroke="#c81818" stroke-width="1.5" stroke-dasharray="12 2.5 2 2.5" stroke-opacity="0.8"/>
<line x1="543.6" y1="261.5" x2="543.6" y2="566" stroke="#c81818" stroke-width="1.5" stroke-dasharray="12 2.5 2 2.5" stroke-opacity="0.8"/>
<line x1="598.9" y1="261.5" x2="598.9" y2="566" stroke="#c81818" stroke-width="1.5" stroke-dasharray="12 2.5 2 2.5" stroke-opacity="0.8"/>
<line x1="653.5" y1="261.5" x2="653.5" y2="566" stroke="#c81818" stroke-width="1.5" stroke-dasharray="12 2.5 2 2.5" stroke-opacity="0.8"/>
<line x1="704" y1="261.5" x2="704" y2="566" stroke="#c81818" stroke-width="1.5" stroke-dasharray="12 2.5 2 2.5" stroke-opacity="0.8"/>
<line x1="739.7" y1="261.5" x2="739.7" y2="452" stroke="#c81818" stroke-width="1.5" stroke-dasharray="12 2.5 2 2.5" stroke-opacity="0.8"/>
<line x1="758.6" y1="261.5" x2="758.6" y2="566" stroke="#c81818" stroke-width="1.5" stroke-dasharray="12 2.5 2 2.5" stroke-opacity="0.8"/>
<line x1="814" y1="261.5" x2="814" y2="566" stroke="#c81818" stroke-width="1.5" stroke-dasharray="12 2.5 2 2.5" stroke-opacity="0.8"/>
<line x1="834.3" y1="261.5" x2="834.3" y2="452" stroke="#c81818" stroke-width="1.5" stroke-dasharray="12 2.5 2 2.5" stroke-opacity="0.8"/>
<line x1="869" y1="261.5" x2="869" y2="566" stroke="#c81818" stroke-width="1.5" stroke-dasharray="12 2.5 2 2.5" stroke-opacity="0.8"/>
<line x1="919.4" y1="261.5" x2="919.4" y2="566" stroke="#c81818" stroke-width="1.5" stroke-dasharray="12 2.5 2 2.5" stroke-opacity="0.8"/>
<line x1="974.3" y1="261.5" x2="974.3" y2="566" stroke="#c81818" stroke-width="1.5" stroke-dasharray="12 2.5 2 2.5" stroke-opacity="0.8"/>
<line x1="488.5" y1="265" x2="488.5" y2="292" stroke="#1ae81a" stroke-width="1" />
<line x1="511.5" y1="265" x2="511.5" y2="292" stroke="#1ae81a" stroke-width="1" />
<line x1="543.5" y1="265" x2="543.5" y2="292" stroke="#1ae81a" stroke-width="1" />
<line x1="598.5" y1="265" x2="598.5" y2="292" stroke="#1ae81a" stroke-width="1" />
<line x1="653.5" y1="265" x2="653.5" y2="292" stroke="#1ae81a" stroke-width="1" />
<line x1="704.5" y1="265" x2="704.5" y2="292" stroke="#1ae81a" stroke-width="1" />
<line x1="739.5" y1="265" x2="739.5" y2="292" stroke="#1ae81a" stroke-width="1" />
<line x1="758.5" y1="265" x2="758.5" y2="292" stroke="#1ae81a" stroke-width="1" />
<line x1="814.5" y1="265" x2="814.5" y2="292" stroke="#1ae81a" stroke-width="1" />
<line x1="834.5" y1="265" x2="834.5" y2="292" stroke="#1ae81a" stroke-width="1" />
<line x1="869.5" y1="265" x2="869.5" y2="292" stroke="#1ae81a" stroke-width="1" />
<line x1="919.5" y1="265" x2="919.5" y2="292" stroke="#1ae81a" stroke-width="1" />
<line x1="974.5" y1="265" x2="974.5" y2="292" stroke="#1ae81a" stroke-width="1" />
<line x1="488.5" y1="538" x2="488.5" y2="564" stroke="#1ae81a" stroke-width="1" />
<line x1="543.5" y1="538" x2="543.5" y2="564" stroke="#1ae81a" stroke-width="1" />
<line x1="598.5" y1="538" x2="598.5" y2="564" stroke="#1ae81a" stroke-width="1" />
<line x1="653.5" y1="538" x2="653.5" y2="564" stroke="#1ae81a" stroke-width="1" />
<line x1="704.5" y1="538" x2="704.5" y2="564" stroke="#1ae81a" stroke-width="1" />
<line x1="758.5" y1="538" x2="758.5" y2="564" stroke="#1ae81a" stroke-width="1" />
<line x1="814.5" y1="538" x2="814.5" y2="564" stroke="#1ae81a" stroke-width="1" />
<line x1="869.5" y1="538" x2="869.5" y2="564" stroke="#1ae81a" stroke-width="1" />
<line x1="919.5" y1="538" x2="919.5" y2="564" stroke="#1ae81a" stroke-width="1" />
<line x1="974.5" y1="538" x2="974.5" y2="564" stroke="#1ae81a" stroke-width="1" />
<line x1="721" y1="452" x2="721" y2="566" stroke="#c81818" stroke-width="1.5" stroke-dasharray="12 2.5 2 2.5" stroke-opacity="0.8"/>
<line x1="851" y1="452" x2="851" y2="566" stroke="#c81818" stroke-width="1.5" stroke-dasharray="12 2.5 2 2.5" stroke-opacity="0.8"/>
<line x1="432" y1="320.5" x2="1032" y2="320.5" stroke="#c81818" stroke-width="1.5" stroke-dasharray="12 2.5 2 2.5" stroke-opacity="0.8"/>
<line x1="432" y1="367.2" x2="1032" y2="367.2" stroke="#c81818" stroke-width="1.5" stroke-dasharray="12 2.5 2 2.5" stroke-opacity="0.8"/>
<line x1="432" y1="387.2" x2="1032" y2="387.2" stroke="#c81818" stroke-width="1.5" stroke-dasharray="12 2.5 2 2.5" stroke-opacity="0.8"/>
<line x1="432" y1="436.7" x2="1032" y2="436.7" stroke="#c81818" stroke-width="1.5" stroke-dasharray="12 2.5 2 2.5" stroke-opacity="0.8"/>
<line x1="432" y1="449.2" x2="1032" y2="449.2" stroke="#c81818" stroke-width="1.5" stroke-dasharray="12 2.5 2 2.5" stroke-opacity="0.8"/>
<rect x="701.5" y="365.2" width="4" height="4" fill="#e07070" stroke="#f0f0f0" stroke-width=".7"/>
<rect x="701.5" y="386" width="4" height="4" fill="#e07070" stroke="#f0f0f0" stroke-width=".7"/>
<rect x="701.5" y="435.5" width="4" height="4" fill="#e07070" stroke="#f0f0f0" stroke-width=".7"/>
<rect x="701.5" y="447.2" width="4" height="4" fill="#e07070" stroke="#f0f0f0" stroke-width=".7"/>
<rect x="756.6" y="365.2" width="4" height="4" fill="#e07070" stroke="#f0f0f0" stroke-width=".7"/>
<rect x="756.6" y="386" width="4" height="4" fill="#e07070" stroke="#f0f0f0" stroke-width=".7"/>
<rect x="756.6" y="435.5" width="4" height="4" fill="#e07070" stroke="#f0f0f0" stroke-width=".7"/>
<rect x="756.6" y="447.2" width="4" height="4" fill="#e07070" stroke="#f0f0f0" stroke-width=".7"/>
<rect x="812" y="365.2" width="4" height="4" fill="#e07070" stroke="#f0f0f0" stroke-width=".7"/>
<rect x="812" y="386" width="4" height="4" fill="#e07070" stroke="#f0f0f0" stroke-width=".7"/>
<rect x="812" y="435.5" width="4" height="4" fill="#e07070" stroke="#f0f0f0" stroke-width=".7"/>
<rect x="812" y="447.2" width="4" height="4" fill="#e07070" stroke="#f0f0f0" stroke-width=".7"/>
<rect x="868" y="365.2" width="4" height="4" fill="#e07070" stroke="#f0f0f0" stroke-width=".7"/>
<rect x="868" y="386" width="4" height="4" fill="#e07070" stroke="#f0f0f0" stroke-width=".7"/>
<rect x="868" y="435.5" width="4" height="4" fill="#e07070" stroke="#f0f0f0" stroke-width=".7"/>
<rect x="868" y="447.2" width="4" height="4" fill="#e07070" stroke="#f0f0f0" stroke-width=".7"/>
<path d="M754.4 312 V295.4 H819.4 V312" stroke="#f0f0f0" stroke-width="1.1" fill="none" />
<path d="M757.5 320 V299 H816.5 V320" stroke="#f0f0f0" stroke-width="0.9" fill="none" />
<path d="M819.4 301 H859 V312" stroke="#f0f0f0" stroke-width="0.9" fill="none" />
<line x1="861" y1="306.5" x2="866" y2="306.5" stroke="#f0f0f0" stroke-width="0.8" />
<path d="M694.5 441 V469 H731 V452 M694.5 441 H703" stroke="#f0f0f0" stroke-width="1" fill="none" />
<path d="M843 452 V469 H877 V441 H870" stroke="#f0f0f0" stroke-width="1" fill="none" />
<path d="M731 452 H752 V465 M821 465 V452 H843" stroke="#f0f0f0" stroke-width="0.9" fill="none" />
<path d="M735 455 L740 460 M748 455 L744 460 M826 455 L831 460 M839 455 L835 460" stroke="#f0f0f0" stroke-width="0.8" fill="none" />
<path d="M752.6 450 V502.4 H821 V450" stroke="#f0f0f0" stroke-width="1.1" fill="none" />
<path d="M756 450 V498.5 H818 V450" stroke="#f0f0f0" stroke-width="0.8" fill="none" />
<line x1="752.6" y1="500.5" x2="821" y2="500.5" stroke="#f0f0f0" stroke-width="0.7" />
<path d="M686 532 C686 495 710 470 752 465" stroke="#f0f0f0" stroke-width="1.1" fill="none" />
<path d="M887 532 C887 495 863 470 821 465" stroke="#f0f0f0" stroke-width="1.1" fill="none" />
<path d="M719.4 532 C722 515 735 503 752.6 501" stroke="#f0f0f0" stroke-width="1.1" fill="none" />
<path d="M853.6 532 C851 515 838 503 821 501" stroke="#f0f0f0" stroke-width="1.1" fill="none" />
<line x1="686" y1="532.5" x2="719.4" y2="532.5" stroke="#f0f0f0" stroke-width="1.1" />
<line x1="853.6" y1="532.5" x2="887" y2="532.5" stroke="#f0f0f0" stroke-width="1.1" />
<path d="M760 450 L762 456 Q766 459 770 456 L772 450" stroke="#f0f0f0" stroke-width="0.9" fill="none" />
<path d="M773 450 L775 456 Q779 459 783 456 L785 450" stroke="#f0f0f0" stroke-width="0.9" fill="none" />
<path d="M786 450 L788 456 Q792 459 796 456 L798 450" stroke="#f0f0f0" stroke-width="0.9" fill="none" />
<path d="M799 450 L801 456 Q805 459 809 456 L811 450" stroke="#f0f0f0" stroke-width="0.9" fill="none" />
<path d="M768 319 L770 314 Q773 312 776 314 L778 319" stroke="#f0f0f0" stroke-width="0.9" fill="none" />
<path d="M780 319 L782 314 Q785 312 788 314 L790 319" stroke="#f0f0f0" stroke-width="0.9" fill="none" />
<path d="M792 319 L794 314 Q797 312 800 314 L802 319" stroke="#f0f0f0" stroke-width="0.9" fill="none" />
<path d="M804 319 L806 314 Q809 312 812 314 L814 319" stroke="#f0f0f0" stroke-width="0.9" fill="none" />
<path d="M489 389.5 L492 395.5 Q495 397 498 395.5 L501 389.5" stroke="#f0f0f0" stroke-width="0.9" fill="none" />
<path d="M546 389.5 L549 395.5 Q552 397 555 395.5 L558 389.5" stroke="#f0f0f0" stroke-width="0.9" fill="none" />
<path d="M586 389.5 L589 395.5 Q592 397 595 395.5 L598 389.5" stroke="#f0f0f0" stroke-width="0.9" fill="none" />
<path d="M601 389.5 L604 395.5 Q607 397 610 395.5 L613 389.5" stroke="#f0f0f0" stroke-width="0.9" fill="none" />
<path d="M643 389.5 L646 395.5 Q649 397 652 395.5 L655 389.5" stroke="#f0f0f0" stroke-width="0.9" fill="none" />
<path d="M656 389.5 L659 395.5 Q662 397 665 395.5 L668 389.5" stroke="#f0f0f0" stroke-width="0.9" fill="none" />
<path d="M688 389.5 L691 395.5 Q694 397 697 395.5 L700 389.5" stroke="#f0f0f0" stroke-width="0.9" fill="none" />
<path d="M873 389.5 L876 395.5 Q879 397 882 395.5 L885 389.5" stroke="#f0f0f0" stroke-width="0.9" fill="none" />
<path d="M908 389.5 L911 395.5 Q914 397 917 395.5 L920 389.5" stroke="#f0f0f0" stroke-width="0.9" fill="none" />
<path d="M922 389.5 L925 395.5 Q928 397 931 395.5 L934 389.5" stroke="#f0f0f0" stroke-width="0.9" fill="none" />
<path d="M960 389.5 L963 395.5 Q966 397 969 395.5 L972 389.5" stroke="#f0f0f0" stroke-width="0.9" fill="none" />
<path d="M527 368 a6 6 0 0 1 6 -6 v6" stroke="#f0f0f0" stroke-width="0.8" fill="none" />
<line x1="489" y1="331.5" x2="508" y2="331.5" stroke="#f0f0f0" stroke-width="0.8" stroke-dasharray="2 1.5"/>
<line x1="489" y1="336.5" x2="508" y2="336.5" stroke="#f0f0f0" stroke-width="0.8" stroke-dasharray="2 1.5"/>
<line x1="489" y1="341.5" x2="508" y2="341.5" stroke="#f0f0f0" stroke-width="0.8" stroke-dasharray="2 1.5"/>
<line x1="489" y1="346.5" x2="508" y2="346.5" stroke="#f0f0f0" stroke-width="0.8" stroke-dasharray="2 1.5"/>
<line x1="489" y1="351.5" x2="508" y2="351.5" stroke="#f0f0f0" stroke-width="0.8" stroke-dasharray="2 1.5"/>
<line x1="489" y1="356.5" x2="508" y2="356.5" stroke="#f0f0f0" stroke-width="0.8" stroke-dasharray="2 1.5"/>
<line x1="499" y1="348.5" x2="511" y2="348.5" stroke="#f0f0f0" stroke-width="0.8" />
<line x1="499" y1="352.5" x2="511" y2="352.5" stroke="#f0f0f0" stroke-width="0.8" />
<line x1="499" y1="356.5" x2="511" y2="356.5" stroke="#f0f0f0" stroke-width="0.8" />
<line x1="499" y1="360.5" x2="511" y2="360.5" stroke="#f0f0f0" stroke-width="0.8" />
<line x1="499.5" y1="332" x2="499.5" y2="362" stroke="#f0f0f0" stroke-width="0.8" />
<line x1="477" y1="354" x2="484" y2="358" stroke="#f0f0f0" stroke-width="0.9" />
<line x1="477" y1="357.5" x2="482" y2="357.5" stroke="#f0f0f0" stroke-width="0.8" />
<line x1="477" y1="360" x2="484" y2="364" stroke="#f0f0f0" stroke-width="0.9" />
<line x1="477" y1="363.5" x2="482" y2="363.5" stroke="#f0f0f0" stroke-width="0.8" />
<line x1="477" y1="366" x2="484" y2="370" stroke="#f0f0f0" stroke-width="0.9" />
<line x1="477" y1="369.5" x2="482" y2="369.5" stroke="#f0f0f0" stroke-width="0.8" />
<line x1="477" y1="372" x2="484" y2="376" stroke="#f0f0f0" stroke-width="0.9" />
<line x1="477" y1="375.5" x2="482" y2="375.5" stroke="#f0f0f0" stroke-width="0.8" />
<line x1="477" y1="378" x2="484" y2="382" stroke="#f0f0f0" stroke-width="0.9" />
<line x1="477" y1="381.5" x2="482" y2="381.5" stroke="#f0f0f0" stroke-width="0.8" />
<line x1="477" y1="384" x2="484" y2="388" stroke="#f0f0f0" stroke-width="0.9" />
<line x1="477" y1="387.5" x2="482" y2="387.5" stroke="#f0f0f0" stroke-width="0.8" />
<line x1="836" y1="323.5" x2="870" y2="323.5" stroke="#f0f0f0" stroke-width="0.9" stroke-dasharray="2.2 1.3"/>
<line x1="836" y1="327.5" x2="870" y2="327.5" stroke="#f0f0f0" stroke-width="0.9" stroke-dasharray="2.2 1.3"/>
<line x1="836" y1="331.5" x2="870" y2="331.5" stroke="#f0f0f0" stroke-width="0.9" stroke-dasharray="2.2 1.3"/>
<line x1="836" y1="335.5" x2="870" y2="335.5" stroke="#f0f0f0" stroke-width="0.9" stroke-dasharray="2.2 1.3"/>
<line x1="836" y1="340.5" x2="870" y2="340.5" stroke="#f0f0f0" stroke-width="0.9" stroke-dasharray="2.2 1.3"/>
<line x1="836" y1="344.5" x2="870" y2="344.5" stroke="#f0f0f0" stroke-width="0.9" stroke-dasharray="2.2 1.3"/>
<line x1="836" y1="348.5" x2="870" y2="348.5" stroke="#f0f0f0" stroke-width="0.9" stroke-dasharray="2.2 1.3"/>
<line x1="836" y1="353.5" x2="870" y2="353.5" stroke="#f0f0f0" stroke-width="0.9" stroke-dasharray="2.2 1.3"/>
<line x1="852.5" y1="323" x2="852.5" y2="356" stroke="#f0f0f0" stroke-width="0.8" />
<path d="M836 356 H852 V367 M842 345 L848 350" stroke="#f0f0f0" stroke-width="0.8" fill="none" />
<line x1="866" y1="352.5" x2="890" y2="352.5" stroke="#f0f0f0" stroke-width="0.8" />
<line x1="866" y1="355.5" x2="890" y2="355.5" stroke="#f0f0f0" stroke-width="0.8" />
<line x1="866" y1="358.5" x2="890" y2="358.5" stroke="#f0f0f0" stroke-width="0.8" />
<line x1="866" y1="361.5" x2="890" y2="361.5" stroke="#f0f0f0" stroke-width="0.8" />
<line x1="866" y1="364.5" x2="890" y2="364.5" stroke="#f0f0f0" stroke-width="0.8" />
<line x1="866.5" y1="352" x2="866.5" y2="367" stroke="#f0f0f0" stroke-width="0.9" />
<line x1="890.5" y1="352" x2="890.5" y2="367" stroke="#f0f0f0" stroke-width="0.9" />
<text x="515.6" y="415.5" font-size="6" font-weight="bold" fill="#f4f4f4" font-family="Liberation Sans" text-anchor="middle">5#1</text>
<text x="569" y="415.5" font-size="6" font-weight="bold" fill="#f4f4f4" font-family="Liberation Sans" text-anchor="middle">5#1</text>
<text x="626" y="415.5" font-size="6" font-weight="bold" fill="#f4f4f4" font-family="Liberation Sans" text-anchor="middle">5#1</text>
<text x="679" y="415.5" font-size="6" font-weight="bold" fill="#f4f4f4" font-family="Liberation Sans" text-anchor="middle">5#1</text>
<text x="893" y="415.5" font-size="6" font-weight="bold" fill="#f4f4f4" font-family="Liberation Sans" text-anchor="middle">5#1</text>
<text x="946" y="415.5" font-size="6" font-weight="bold" fill="#f4f4f4" font-family="Liberation Sans" text-anchor="middle">5#1</text>
<text x="783" y="414.5" font-size="6" font-weight="bold" fill="#f4f4f4" font-family="Liberation Sans" text-anchor="middle">89</text>
<text x="528" y="345" font-size="6" font-weight="bold" fill="#f4f4f4" font-family="Liberation Sans" text-anchor="middle">4#RS</text>
<text x="626" y="380" font-size="6" font-weight="bold" fill="#f4f4f4" font-family="Liberation Sans" text-anchor="middle">49</text>
<text x="919" y="380" font-size="6" font-weight="bold" fill="#f4f4f4" font-family="Liberation Sans" text-anchor="middle">49</text>
<text x="720" y="333" font-size="6" font-weight="bold" fill="#f4f4f4" font-family="Liberation Sans" text-anchor="middle">5#</text>
<text x="720" y="355" font-size="6" font-weight="bold" fill="#f4f4f4" font-family="Liberation Sans" text-anchor="middle">5#</text>
<text x="785" y="343" font-size="6" font-weight="bold" fill="#f4f4f4" font-family="Liberation Sans" text-anchor="middle">RS#</text>
<text x="824" y="332" font-size="6" font-weight="bold" fill="#f4f4f4" font-family="Liberation Sans" text-anchor="middle">4#</text>
<text x="823" y="355" font-size="6" font-weight="bold" fill="#f4f4f4" font-family="Liberation Sans" text-anchor="middle">4#</text>
<line x1="744.0" y1="327" x2="745.3" y2="327" stroke="#f0f0f0" stroke-width="1.4" />
<line x1="746.2" y1="327" x2="747.5" y2="327" stroke="#f0f0f0" stroke-width="1.4" />
<line x1="748.0" y1="335" x2="749.3" y2="335" stroke="#f0f0f0" stroke-width="1.4" />
<line x1="750.2" y1="335" x2="751.5" y2="335" stroke="#f0f0f0" stroke-width="1.4" />
<line x1="752.4" y1="335" x2="753.6999999999999" y2="335" stroke="#f0f0f0" stroke-width="1.4" />
<line x1="497.0" y1="384" x2="498.3" y2="384" stroke="#f0f0f0" stroke-width="1.4" />
<line x1="499.2" y1="384" x2="500.5" y2="384" stroke="#f0f0f0" stroke-width="1.4" />
<line x1="501.4" y1="384" x2="502.7" y2="384" stroke="#f0f0f0" stroke-width="1.4" />
<line x1="497.0" y1="441" x2="498.3" y2="441" stroke="#f0f0f0" stroke-width="1.4" />
<line x1="499.2" y1="441" x2="500.5" y2="441" stroke="#f0f0f0" stroke-width="1.4" />
<line x1="501.4" y1="441" x2="502.7" y2="441" stroke="#f0f0f0" stroke-width="1.4" />
<line x1="532.0" y1="384" x2="533.3" y2="384" stroke="#f0f0f0" stroke-width="1.4" />
<line x1="534.2" y1="384" x2="535.5" y2="384" stroke="#f0f0f0" stroke-width="1.4" />
<line x1="536.4" y1="384" x2="537.6999999999999" y2="384" stroke="#f0f0f0" stroke-width="1.4" />
<line x1="532.0" y1="441" x2="533.3" y2="441" stroke="#f0f0f0" stroke-width="1.4" />
<line x1="534.2" y1="441" x2="535.5" y2="441" stroke="#f0f0f0" stroke-width="1.4" />
<line x1="536.4" y1="441" x2="537.6999999999999" y2="441" stroke="#f0f0f0" stroke-width="1.4" />
<line x1="560.0" y1="384" x2="561.3" y2="384" stroke="#f0f0f0" stroke-width="1.4" />
<line x1="562.2" y1="384" x2="563.5" y2="384" stroke="#f0f0f0" stroke-width="1.4" />
<line x1="564.4" y1="384" x2="565.6999999999999" y2="384" stroke="#f0f0f0" stroke-width="1.4" />
<line x1="560.0" y1="441" x2="561.3" y2="441" stroke="#f0f0f0" stroke-width="1.4" />
<line x1="562.2" y1="441" x2="563.5" y2="441" stroke="#f0f0f0" stroke-width="1.4" />
<line x1="564.4" y1="441" x2="565.6999999999999" y2="441" stroke="#f0f0f0" stroke-width="1.4" />
<line x1="592.0" y1="384" x2="593.3" y2="384" stroke="#f0f0f0" stroke-width="1.4" />
<line x1="594.2" y1="384" x2="595.5" y2="384" stroke="#f0f0f0" stroke-width="1.4" />
<line x1="596.4" y1="384" x2="597.6999999999999" y2="384" stroke="#f0f0f0" stroke-width="1.4" />
<line x1="592.0" y1="441" x2="593.3" y2="441" stroke="#f0f0f0" stroke-width="1.4" />
<line x1="594.2" y1="441" x2="595.5" y2="441" stroke="#f0f0f0" stroke-width="1.4" />
<line x1="596.4" y1="441" x2="597.6999999999999" y2="441" stroke="#f0f0f0" stroke-width="1.4" />
<line x1="614.0" y1="384" x2="615.3" y2="384" stroke="#f0f0f0" stroke-width="1.4" />
<line x1="616.2" y1="384" x2="617.5" y2="384" stroke="#f0f0f0" stroke-width="1.4" />
<line x1="618.4" y1="384" x2="619.6999999999999" y2="384" stroke="#f0f0f0" stroke-width="1.4" />
<line x1="614.0" y1="441" x2="615.3" y2="441" stroke="#f0f0f0" stroke-width="1.4" />
<line x1="616.2" y1="441" x2="617.5" y2="441" stroke="#f0f0f0" stroke-width="1.4" />
<line x1="618.4" y1="441" x2="619.6999999999999" y2="441" stroke="#f0f0f0" stroke-width="1.4" />
<line x1="641.0" y1="384" x2="642.3" y2="384" stroke="#f0f0f0" stroke-width="1.4" />
<line x1="643.2" y1="384" x2="644.5" y2="384" stroke="#f0f0f0" stroke-width="1.4" />
<line x1="645.4" y1="384" x2="646.6999999999999" y2="384" stroke="#f0f0f0" stroke-width="1.4" />
<line x1="641.0" y1="441" x2="642.3" y2="441" stroke="#f0f0f0" stroke-width="1.4" />
<line x1="643.2" y1="441" x2="644.5" y2="441" stroke="#f0f0f0" stroke-width="1.4" />
<line x1="645.4" y1="441" x2="646.6999999999999" y2="441" stroke="#f0f0f0" stroke-width="1.4" />
<line x1="665.0" y1="384" x2="666.3" y2="384" stroke="#f0f0f0" stroke-width="1.4" />
<line x1="667.2" y1="384" x2="668.5" y2="384" stroke="#f0f0f0" stroke-width="1.4" />
<line x1="669.4" y1="384" x2="670.6999999999999" y2="384" stroke="#f0f0f0" stroke-width="1.4" />
<line x1="665.0" y1="441" x2="666.3" y2="441" stroke="#f0f0f0" stroke-width="1.4" />
<line x1="667.2" y1="441" x2="668.5" y2="441" stroke="#f0f0f0" stroke-width="1.4" />
<line x1="669.4" y1="441" x2="670.6999999999999" y2="441" stroke="#f0f0f0" stroke-width="1.4" />
<line x1="690.0" y1="384" x2="691.3" y2="384" stroke="#f0f0f0" stroke-width="1.4" />
<line x1="692.2" y1="384" x2="693.5" y2="384" stroke="#f0f0f0" stroke-width="1.4" />
<line x1="694.4" y1="384" x2="695.6999999999999" y2="384" stroke="#f0f0f0" stroke-width="1.4" />
<line x1="690.0" y1="441" x2="691.3" y2="441" stroke="#f0f0f0" stroke-width="1.4" />
<line x1="692.2" y1="441" x2="693.5" y2="441" stroke="#f0f0f0" stroke-width="1.4" />
<line x1="694.4" y1="441" x2="695.6999999999999" y2="441" stroke="#f0f0f0" stroke-width="1.4" />
<line x1="716.0" y1="384" x2="717.3" y2="384" stroke="#f0f0f0" stroke-width="1.4" />
<line x1="718.2" y1="384" x2="719.5" y2="384" stroke="#f0f0f0" stroke-width="1.4" />
<line x1="720.4" y1="384" x2="721.6999999999999" y2="384" stroke="#f0f0f0" stroke-width="1.4" />
<line x1="716.0" y1="441" x2="717.3" y2="441" stroke="#f0f0f0" stroke-width="1.4" />
<line x1="718.2" y1="441" x2="719.5" y2="441" stroke="#f0f0f0" stroke-width="1.4" />
<line x1="720.4" y1="441" x2="721.6999999999999" y2="441" stroke="#f0f0f0" stroke-width="1.4" />
<line x1="735.0" y1="384" x2="736.3" y2="384" stroke="#f0f0f0" stroke-width="1.4" />
<line x1="737.2" y1="384" x2="738.5" y2="384" stroke="#f0f0f0" stroke-width="1.4" />
<line x1="739.4" y1="384" x2="740.6999999999999" y2="384" stroke="#f0f0f0" stroke-width="1.4" />
<line x1="735.0" y1="441" x2="736.3" y2="441" stroke="#f0f0f0" stroke-width="1.4" />
<line x1="737.2" y1="441" x2="738.5" y2="441" stroke="#f0f0f0" stroke-width="1.4" />
<line x1="739.4" y1="441" x2="740.6999999999999" y2="441" stroke="#f0f0f0" stroke-width="1.4" />
<line x1="812.0" y1="384" x2="813.3" y2="384" stroke="#f0f0f0" stroke-width="1.4" />
<line x1="814.2" y1="384" x2="815.5" y2="384" stroke="#f0f0f0" stroke-width="1.4" />
<line x1="816.4" y1="384" x2="817.6999999999999" y2="384" stroke="#f0f0f0" stroke-width="1.4" />
<line x1="812.0" y1="441" x2="813.3" y2="441" stroke="#f0f0f0" stroke-width="1.4" />
<line x1="814.2" y1="441" x2="815.5" y2="441" stroke="#f0f0f0" stroke-width="1.4" />
<line x1="816.4" y1="441" x2="817.6999999999999" y2="441" stroke="#f0f0f0" stroke-width="1.4" />
<line x1="849.0" y1="384" x2="850.3" y2="384" stroke="#f0f0f0" stroke-width="1.4" />
<line x1="851.2" y1="384" x2="852.5" y2="384" stroke="#f0f0f0" stroke-width="1.4" />
<line x1="853.4" y1="384" x2="854.6999999999999" y2="384" stroke="#f0f0f0" stroke-width="1.4" />
<line x1="849.0" y1="441" x2="850.3" y2="441" stroke="#f0f0f0" stroke-width="1.4" />
<line x1="851.2" y1="441" x2="852.5" y2="441" stroke="#f0f0f0" stroke-width="1.4" />
<line x1="853.4" y1="441" x2="854.6999999999999" y2="441" stroke="#f0f0f0" stroke-width="1.4" />
<line x1="885.0" y1="384" x2="886.3" y2="384" stroke="#f0f0f0" stroke-width="1.4" />
<line x1="887.2" y1="384" x2="888.5" y2="384" stroke="#f0f0f0" stroke-width="1.4" />
<line x1="889.4" y1="384" x2="890.6999999999999" y2="384" stroke="#f0f0f0" stroke-width="1.4" />
<line x1="885.0" y1="441" x2="886.3" y2="441" stroke="#f0f0f0" stroke-width="1.4" />
<line x1="887.2" y1="441" x2="888.5" y2="441" stroke="#f0f0f0" stroke-width="1.4" />
<line x1="889.4" y1="441" x2="890.6999999999999" y2="441" stroke="#f0f0f0" stroke-width="1.4" />
<line x1="905.0" y1="384" x2="906.3" y2="384" stroke="#f0f0f0" stroke-width="1.4" />
<line x1="907.2" y1="384" x2="908.5" y2="384" stroke="#f0f0f0" stroke-width="1.4" />
<line x1="909.4" y1="384" x2="910.6999999999999" y2="384" stroke="#f0f0f0" stroke-width="1.4" />
<line x1="905.0" y1="441" x2="906.3" y2="441" stroke="#f0f0f0" stroke-width="1.4" />
<line x1="907.2" y1="441" x2="908.5" y2="441" stroke="#f0f0f0" stroke-width="1.4" />
<line x1="909.4" y1="441" x2="910.6999999999999" y2="441" stroke="#f0f0f0" stroke-width="1.4" />
<line x1="935.0" y1="384" x2="936.3" y2="384" stroke="#f0f0f0" stroke-width="1.4" />
<line x1="937.2" y1="384" x2="938.5" y2="384" stroke="#f0f0f0" stroke-width="1.4" />
<line x1="939.4" y1="384" x2="940.6999999999999" y2="384" stroke="#f0f0f0" stroke-width="1.4" />
<line x1="935.0" y1="441" x2="936.3" y2="441" stroke="#f0f0f0" stroke-width="1.4" />
<line x1="937.2" y1="441" x2="938.5" y2="441" stroke="#f0f0f0" stroke-width="1.4" />
<line x1="939.4" y1="441" x2="940.6999999999999" y2="441" stroke="#f0f0f0" stroke-width="1.4" />
<line x1="962.0" y1="384" x2="963.3" y2="384" stroke="#f0f0f0" stroke-width="1.4" />
<line x1="964.2" y1="384" x2="965.5" y2="384" stroke="#f0f0f0" stroke-width="1.4" />
<line x1="966.4" y1="384" x2="967.6999999999999" y2="384" stroke="#f0f0f0" stroke-width="1.4" />
<line x1="962.0" y1="441" x2="963.3" y2="441" stroke="#f0f0f0" stroke-width="1.4" />
<line x1="964.2" y1="441" x2="965.5" y2="441" stroke="#f0f0f0" stroke-width="1.4" />
<line x1="966.4" y1="441" x2="967.6999999999999" y2="441" stroke="#f0f0f0" stroke-width="1.4" />
<line x1="494.0" y1="316" x2="495.3" y2="316" stroke="#f0f0f0" stroke-width="1.4" />
<line x1="496.2" y1="316" x2="497.5" y2="316" stroke="#f0f0f0" stroke-width="1.4" />
<line x1="498.4" y1="316" x2="499.7" y2="316" stroke="#f0f0f0" stroke-width="1.4" />
<line x1="522.0" y1="316" x2="523.3" y2="316" stroke="#f0f0f0" stroke-width="1.4" />
<line x1="524.2" y1="316" x2="525.5" y2="316" stroke="#f0f0f0" stroke-width="1.4" />
<line x1="526.4" y1="316" x2="527.6999999999999" y2="316" stroke="#f0f0f0" stroke-width="1.4" />
<line x1="565.0" y1="364" x2="566.3" y2="364" stroke="#f0f0f0" stroke-width="1.4" />
<line x1="567.2" y1="364" x2="568.5" y2="364" stroke="#f0f0f0" stroke-width="1.4" />
<line x1="569.4" y1="364" x2="570.6999999999999" y2="364" stroke="#f0f0f0" stroke-width="1.4" />
<line x1="592.0" y1="364" x2="593.3" y2="364" stroke="#f0f0f0" stroke-width="1.4" />
<line x1="594.2" y1="364" x2="595.5" y2="364" stroke="#f0f0f0" stroke-width="1.4" />
<line x1="596.4" y1="364" x2="597.6999999999999" y2="364" stroke="#f0f0f0" stroke-width="1.4" />
<line x1="620.0" y1="364" x2="621.3" y2="364" stroke="#f0f0f0" stroke-width="1.4" />
<line x1="622.2" y1="364" x2="623.5" y2="364" stroke="#f0f0f0" stroke-width="1.4" />
<line x1="624.4" y1="364" x2="625.6999999999999" y2="364" stroke="#f0f0f0" stroke-width="1.4" />
<line x1="646.0" y1="364" x2="647.3" y2="364" stroke="#f0f0f0" stroke-width="1.4" />
<line x1="648.2" y1="364" x2="649.5" y2="364" stroke="#f0f0f0" stroke-width="1.4" />
<line x1="650.4" y1="364" x2="651.6999999999999" y2="364" stroke="#f0f0f0" stroke-width="1.4" />
<line x1="675.0" y1="364" x2="676.3" y2="364" stroke="#f0f0f0" stroke-width="1.4" />
<line x1="677.2" y1="364" x2="678.5" y2="364" stroke="#f0f0f0" stroke-width="1.4" />
<line x1="679.4" y1="364" x2="680.6999999999999" y2="364" stroke="#f0f0f0" stroke-width="1.4" />
<line x1="890.0" y1="364" x2="891.3" y2="364" stroke="#f0f0f0" stroke-width="1.4" />
<line x1="892.2" y1="364" x2="893.5" y2="364" stroke="#f0f0f0" stroke-width="1.4" />
<line x1="894.4" y1="364" x2="895.6999999999999" y2="364" stroke="#f0f0f0" stroke-width="1.4" />
<line x1="925.0" y1="364" x2="926.3" y2="364" stroke="#f0f0f0" stroke-width="1.4" />
<line x1="927.2" y1="364" x2="928.5" y2="364" stroke="#f0f0f0" stroke-width="1.4" />
<line x1="929.4" y1="364" x2="930.6999999999999" y2="364" stroke="#f0f0f0" stroke-width="1.4" />
<line x1="955.0" y1="364" x2="956.3" y2="364" stroke="#f0f0f0" stroke-width="1.4" />
<line x1="957.2" y1="364" x2="958.5" y2="364" stroke="#f0f0f0" stroke-width="1.4" />
<line x1="959.4" y1="364" x2="960.6999999999999" y2="364" stroke="#f0f0f0" stroke-width="1.4" />
<line x1="486" y1="405.5" x2="702" y2="405.5" stroke="#1ae81a" stroke-width="1.1" />
<line x1="871" y1="405.5" x2="975" y2="405.5" stroke="#1ae81a" stroke-width="1.1" />
<line x1="490.5" y1="399" x2="490.5" y2="410" stroke="#1ae81a" stroke-width="0.9" />
<line x1="505.5" y1="399" x2="505.5" y2="410" stroke="#1ae81a" stroke-width="0.9" />
<line x1="520.5" y1="399" x2="520.5" y2="410" stroke="#1ae81a" stroke-width="0.9" />
<line x1="540.5" y1="399" x2="540.5" y2="410" stroke="#1ae81a" stroke-width="0.9" />
<line x1="547.5" y1="399" x2="547.5" y2="410" stroke="#1ae81a" stroke-width="0.9" />
<line x1="560.5" y1="399" x2="560.5" y2="410" stroke="#1ae81a" stroke-width="0.9" />
<line x1="580.5" y1="399" x2="580.5" y2="410" stroke="#1ae81a" stroke-width="0.9" />
<line x1="595.5" y1="399" x2="595.5" y2="410" stroke="#1ae81a" stroke-width="0.9" />
<line x1="602.5" y1="399" x2="602.5" y2="410" stroke="#1ae81a" stroke-width="0.9" />
<line x1="616.5" y1="399" x2="616.5" y2="410" stroke="#1ae81a" stroke-width="0.9" />
<line x1="640.5" y1="399" x2="640.5" y2="410" stroke="#1ae81a" stroke-width="0.9" />
<line x1="650.5" y1="399" x2="650.5" y2="410" stroke="#1ae81a" stroke-width="0.9" />
<line x1="656.5" y1="399" x2="656.5" y2="410" stroke="#1ae81a" stroke-width="0.9" />
<line x1="672.5" y1="399" x2="672.5" y2="410" stroke="#1ae81a" stroke-width="0.9" />
<line x1="690.5" y1="399" x2="690.5" y2="410" stroke="#1ae81a" stroke-width="0.9" />
<line x1="700.5" y1="399" x2="700.5" y2="410" stroke="#1ae81a" stroke-width="0.9" />
<line x1="875.5" y1="399" x2="875.5" y2="410" stroke="#1ae81a" stroke-width="0.9" />
<line x1="890.5" y1="399" x2="890.5" y2="410" stroke="#1ae81a" stroke-width="0.9" />
<line x1="905.5" y1="399" x2="905.5" y2="410" stroke="#1ae81a" stroke-width="0.9" />
<line x1="916.5" y1="399" x2="916.5" y2="410" stroke="#1ae81a" stroke-width="0.9" />
<line x1="922.5" y1="399" x2="922.5" y2="410" stroke="#1ae81a" stroke-width="0.9" />
<line x1="940.5" y1="399" x2="940.5" y2="410" stroke="#1ae81a" stroke-width="0.9" />
<line x1="955.5" y1="399" x2="955.5" y2="410" stroke="#1ae81a" stroke-width="0.9" />
<line x1="970.5" y1="399" x2="970.5" y2="410" stroke="#1ae81a" stroke-width="0.9" />
<path d="M626 359 V388 M620 359 H632" stroke="#1ae81a" stroke-width="1" fill="none" />
<line x1="623.5" y1="368.0" x2="623.5" y2="369.3" stroke="#1ae81a" stroke-width="1.3" />
<line x1="623.5" y1="370.2" x2="623.5" y2="371.5" stroke="#1ae81a" stroke-width="1.3" />
<line x1="623.5" y1="372.4" x2="623.5" y2="373.7" stroke="#1ae81a" stroke-width="1.3" />
<path d="M500 374 V380 H551 V374" stroke="#1ae81a" stroke-width="0.9" fill="none" />
<line x1="686.5" y1="313" x2="686.5" y2="367" stroke="#1ae81a" stroke-width="1" />
<line x1="690.5" y1="313" x2="690.5" y2="367" stroke="#1ae81a" stroke-width="1" />
<line x1="683" y1="318.5" x2="695" y2="318.5" stroke="#1ae81a" stroke-width="0.8" />
<line x1="683" y1="326.5" x2="695" y2="326.5" stroke="#1ae81a" stroke-width="0.8" />
<line x1="683" y1="334.5" x2="695" y2="334.5" stroke="#1ae81a" stroke-width="0.8" />
<line x1="683" y1="342.5" x2="695" y2="342.5" stroke="#1ae81a" stroke-width="0.8" />
<line x1="683" y1="350.5" x2="695" y2="350.5" stroke="#1ae81a" stroke-width="0.8" />
<line x1="683" y1="358.5" x2="695" y2="358.5" stroke="#1ae81a" stroke-width="0.8" />
<line x1="683" y1="366.5" x2="695" y2="366.5" stroke="#1ae81a" stroke-width="0.8" />
<line x1="684.5" y1="328.0" x2="684.5" y2="329.3" stroke="#1ae81a" stroke-width="1.3" />
<line x1="684.5" y1="330.2" x2="684.5" y2="331.5" stroke="#1ae81a" stroke-width="1.3" />
<line x1="684.5" y1="332.4" x2="684.5" y2="333.7" stroke="#1ae81a" stroke-width="1.3" />
<line x1="684.5" y1="340.0" x2="684.5" y2="341.3" stroke="#1ae81a" stroke-width="1.3" />
<line x1="684.5" y1="342.2" x2="684.5" y2="343.5" stroke="#1ae81a" stroke-width="1.3" />
<line x1="684.5" y1="344.4" x2="684.5" y2="345.7" stroke="#1ae81a" stroke-width="1.3" />
<line x1="684.5" y1="352.0" x2="684.5" y2="353.3" stroke="#1ae81a" stroke-width="1.3" />
<line x1="684.5" y1="354.2" x2="684.5" y2="355.5" stroke="#1ae81a" stroke-width="1.3" />
<line x1="684.5" y1="356.4" x2="684.5" y2="357.7" stroke="#1ae81a" stroke-width="1.3" />
<line x1="692" y1="333.5" x2="702" y2="333.5" stroke="#1ae81a" stroke-width="0.9" />
<line x1="744.5" y1="296" x2="744.5" y2="334" stroke="#1ae81a" stroke-width="1" />
<line x1="748.5" y1="296" x2="748.5" y2="334" stroke="#1ae81a" stroke-width="1" />
<line x1="742" y1="298.5" x2="750" y2="298.5" stroke="#1ae81a" stroke-width="0.8" />
<line x1="742" y1="306.5" x2="750" y2="306.5" stroke="#1ae81a" stroke-width="0.8" />
<line x1="742" y1="314.5" x2="750" y2="314.5" stroke="#1ae81a" stroke-width="0.8" />
<line x1="742" y1="322.5" x2="750" y2="322.5" stroke="#1ae81a" stroke-width="0.8" />
<line x1="742" y1="330.5" x2="750" y2="330.5" stroke="#1ae81a" stroke-width="0.8" />
<path d="M752 290 H819 M752 286 V294 M819 286 V294" stroke="#1ae81a" stroke-width="1" fill="none" />
<line x1="781.0" y1="289" x2="782.3" y2="289" stroke="#1ae81a" stroke-width="1.4" />
<line x1="783.2" y1="289" x2="784.5" y2="289" stroke="#1ae81a" stroke-width="1.4" />
<line x1="785.4" y1="289" x2="786.6999999999999" y2="289" stroke="#1ae81a" stroke-width="1.4" />
<path d="M882 322 H900 M892 322 V366 M882 352 H900 M882 366 H900" stroke="#1ae81a" stroke-width="0.9" fill="none" />
<line x1="889.5" y1="335.0" x2="889.5" y2="336.3" stroke="#1ae81a" stroke-width="1.3" />
<line x1="889.5" y1="337.2" x2="889.5" y2="338.5" stroke="#1ae81a" stroke-width="1.3" />
<line x1="889.5" y1="339.4" x2="889.5" y2="340.7" stroke="#1ae81a" stroke-width="1.3" />
<path d="M767 322 V367 M804 322 V367 M764 330 H770 M764 345 H770 M764 360 H770 M801 330 H807 M801 345 H807 M801 360 H807" stroke="#1ae81a" stroke-width="0.9" fill="none" />
<path d="M790 370 H838 M790 367 V373 M838 367 V373" stroke="#1ae81a" stroke-width="0.9" fill="none" />
<path d="M722 369 V378 H758 V369" stroke="#1ae81a" stroke-width="0.9" fill="none" />
<line x1="736.0" y1="375" x2="737.3" y2="375" stroke="#1ae81a" stroke-width="1.4" />
<line x1="738.2" y1="375" x2="739.5" y2="375" stroke="#1ae81a" stroke-width="1.4" />
<line x1="740.4" y1="375" x2="741.6999999999999" y2="375" stroke="#1ae81a" stroke-width="1.4" />
<path d="M704 441 V468 M700 441 H722 M713 455 H731" stroke="#1ae81a" stroke-width="0.9" fill="none" />
<path d="M851 441 V468 M845 441 H870 M843 455 H862" stroke="#1ae81a" stroke-width="0.9" fill="none" />
<path d="M744 452 V496 M742 496 H752 M742 452 H752" stroke="#1ae81a" stroke-width="1" fill="none" />
<line x1="746.5" y1="468.0" x2="746.5" y2="469.3" stroke="#1ae81a" stroke-width="1.3" />
<line x1="746.5" y1="470.2" x2="746.5" y2="471.5" stroke="#1ae81a" stroke-width="1.3" />
<line x1="746.5" y1="472.4" x2="746.5" y2="473.7" stroke="#1ae81a" stroke-width="1.3" />
<path d="M752 508 H821 M752 504 V511 M821 504 V511 M766 504 V511 M810 504 V511" stroke="#1ae81a" stroke-width="1" fill="none" />
<line x1="784.0" y1="506" x2="785.3" y2="506" stroke="#1ae81a" stroke-width="1.4" />
<line x1="786.2" y1="506" x2="787.5" y2="506" stroke="#1ae81a" stroke-width="1.4" />
<line x1="788.4" y1="506" x2="789.6999999999999" y2="506" stroke="#1ae81a" stroke-width="1.4" />
<line x1="601.0" y1="428" x2="602.3" y2="428" stroke="#1ae81a" stroke-width="1.4" />
<line x1="603.2" y1="428" x2="604.5" y2="428" stroke="#1ae81a" stroke-width="1.4" />
<line x1="605.4" y1="428" x2="606.6999999999999" y2="428" stroke="#1ae81a" stroke-width="1.4" />
<line x1="601.5" y1="425" x2="601.5" y2="432" stroke="#1ae81a" stroke-width="1" />
<line x1="607.5" y1="425" x2="607.5" y2="432" stroke="#1ae81a" stroke-width="1" />

</svg>
<!--/CAD-->
<div id="vscroll" class="a"></div>
<div id="vcb" class="a"></div>
<div id="status" class="a"></div>
<!-- view control bar -->
<div class="a" style="left:5px;top:718px;width:268px;height:17px;background:#f7f7f7"></div>
<div class="t" style="left:20px;top:721px;font-size:10px;color:#111;letter-spacing:0">1&nbsp;&nbsp;:&nbsp;&nbsp;100</div>
<svg class="a" style="left:68px;top:718px" width="214" height="17">
 <rect x="3.5" y="2.5" width="13" height="10" fill="#e6e6e6" stroke="#444"/>
 <path d="M4 5.5 h12 M4 9.5 h12" stroke="#666"/><rect x="7" y="5.5" width="6" height="4" fill="#777"/>
 <path d="M24.5 7.5 l3-3 h9 v8 l-3 3 h-9z M24.5 7.5 h9 l3-3 M33.5 7.5 v8" fill="#f4f4f4" stroke="#444"/>
 <circle cx="45" cy="7" r="3" fill="#f5c400" stroke="#c08a00"/><path d="M41 3 l8 8 M45 1 v12 M39 7 h12" stroke="#d6a400" stroke-width=".8"/>
 <path d="M48 8 l5 5 M53 8 l-5 5" stroke="#e02a2a" stroke-width="1.6"/>
 <circle cx="64" cy="7" r="3.5" fill="#fff" stroke="#2e6fc0" stroke-width="1.2"/><path d="M60 13 h6" stroke="#333"/>
 <path d="M67 9 l5 5 M72 9 l-5 5" stroke="#e02a2a" stroke-width="1.6"/>
 <path d="M79 9 h12 M82 4 v10 M88 4 v10" stroke="#2e6fc0" stroke-width="1.2"/><path d="M84 6 l6 7 M90 6 l-6 7" stroke="#e02a2a" stroke-width="1.6"/>
 <path d="M96 9 h8 v-5 h4 M99 5 v8" stroke="#2e6fc0" stroke-width="1.2" fill="none"/><circle cx="108" cy="9" r="3" fill="#fff" stroke="#2e6fc0"/>
 <path d="M116 7 c3-4 7 4 10 0 c3-4 7 4 10 0" stroke="#333" fill="none" stroke-width="1.1"/><circle cx="121" cy="10" r="2.5" fill="none" stroke="#2e6fc0"/><circle cx="131" cy="10" r="2.5" fill="none" stroke="#2e6fc0"/>
 <circle cx="141" cy="7" r="2.5" fill="#bcdcf6" stroke="#2e6fc0"/><path d="M141 10 v3" stroke="#2e6fc0"/>
 <circle cx="155" cy="9" r="4" fill="#5ba0e0" stroke="#2a6ab0"/><path d="M151 5 a5 5 0 0 1 8 0" stroke="#3aa04a" stroke-width="1.5" fill="none"/><path d="M156 8 l6 6 M162 8 l-6 6" stroke="#e02a2a" stroke-width="1.7"/>
 <rect x="170.5" y="4.5" width="13" height="9" fill="#fff" stroke="#222" stroke-width="1.2" stroke-dasharray="3 1"/><circle cx="180" cy="10" r="2.5" fill="#fff" stroke="#222"/>
 <path d="M188 14 v-6 l5-3 l5 3 v6" fill="#f0f0f0" stroke="#555"/><path d="M190 14 v-4 M194 14 v-5" stroke="#c33" stroke-width="1.4"/><circle cx="199" cy="9" r="3" fill="#f5c400"/>
 <path d="M213 5 v7 l-4-3.5z" fill="#555"/>
</svg>
<!-- h scrollbar -->
<div class="a" style="left:756px;top:720px;width:13px;height:13px;background:linear-gradient(#f8f8f8,#d8d8d8);border:1px solid #9a9a9a;border-radius:2px"></div>
<div class="a" style="left:1244px;top:722px;width:0;height:0;border-top:4px solid transparent;border-bottom:4px solid transparent;border-left:4px solid #555"></div>
<svg class="a" style="left:1256px;top:724px" width="10" height="10"><path d="M8 2 h1 M5 5 h1 M8 5 h1 M2 8 h1 M5 8 h1 M8 8 h1" stroke="#999"/></svg>
<!-- vscroll arrows -->
<div class="a" style="left:1256px;top:150px;width:0;height:0;border-left:4px solid transparent;border-right:4px solid transparent;border-bottom:4px solid #333"></div>
<div class="a" style="left:1253px;top:425px;width:13px;height:13px;background:linear-gradient(90deg,#f8f8f8,#dadada);border:1px solid #9a9a9a;border-radius:2px"></div>
<div class="a" style="left:1256px;top:709px;width:0;height:0;border-left:4px solid transparent;border-right:4px solid transparent;border-top:4px solid #333"></div>
<!-- status bar -->
<div class="t" style="left:2px;top:741px;font-size:11px;color:#222">单击可进行选择; 按 Tab 键并单击可选择其他项目; 按 Ctrl 键并单击可将新项目添加到选择集; 按 Shift 键</div>
<div class="a" style="left:486px;top:737px;width:27px;height:20px;background:#e2e2e2"></div>
<svg class="a" style="left:488px;top:738px" width="22" height="18">
 <path d="M3 8 l3-2 l3 2 v6 l-3 2 l-3-2z" fill="#6fb4ea" stroke="#2a5f9a" stroke-width=".8"/>
 <path d="M7 4 l3-2 l3 2 v5 l-3 2 l-3-2z" fill="#7cc464" stroke="#2f6e24" stroke-width=".8"/>
 <path d="M15 8 c-2 1-2 3 0 4 v5 h2 v-5 c2-1 2-3 0-4 v2 h-2z" fill="#eee" stroke="#555" stroke-width=".8"/>
</svg>
<div class="a" style="left:513px;top:737px;width:181px;height:20px;background:#fff"></div>
<div class="t" style="left:516px;top:741px;font-size:11px;color:#222">设备</div>
<div class="a" style="left:684px;top:746px;width:0;height:0;border-left:3.5px solid transparent;border-right:3.5px solid transparent;border-top:4px solid #111"></div>
<svg class="a" style="left:700px;top:738px" width="16" height="18"><rect x="5.5" y="1.5" width="9" height="6" rx="2" fill="#fff" stroke="#444"/><circle cx="5" cy="12" r="3" fill="#fff" stroke="#444"/><path d="M3 17 h5" stroke="#444"/></svg>
<div class="t" style="left:721px;top:741px;font-size:11px;color:#222">:0</div>
<div class="a" style="left:745px;top:737px;width:25px;height:20px;background:#e2e2e2"></div>
<svg class="a" style="left:750px;top:740px" width="16" height="14"><rect x="1.5" y="1.5" width="13" height="11" fill="#fff" stroke="#333"/><path d="M1.5 4 h13" stroke="#333"/><path d="M4 6.5 h2 M4 9 h2 M7 6.5 h6 M7 9 h6" stroke="#333"/></svg>
<svg class="a" style="left:772px;top:740px" width="16" height="14"><rect x="2" y="1" width="12" height="12" fill="#c8c8c8"/><path d="M4 7 h6 l-2-2 M10 7 l-2 2" stroke="#fff" stroke-width="1.3" fill="none"/></svg>
<div class="a" style="left:791px;top:737px;width:138px;height:20px;background:#f7f7f7"></div>
<div class="t" style="left:794px;top:741px;font-size:11px;color:#9a9a9a">主模型</div>
<div class="a" style="left:918px;top:746px;width:0;height:0;border-left:3.5px solid transparent;border-right:3.5px solid transparent;border-top:4px solid #aaa"></div>
<div class="a" style="left:1000px;top:740px;width:13px;height:13px;background:linear-gradient(#f4f4f4,#fff);border:1px solid #777"></div>
<div class="t" style="left:1015px;top:741px;font-size:11px;color:#222">仅可编辑项</div>
<div class="a" style="left:1073px;top:737px;width:21px;height:20px;background:#e2e2e2"></div>
<div class="a" style="left:1096px;top:737px;width:21px;height:20px;background:#e2e2e2"></div>
<div class="a" style="left:1119px;top:737px;width:21px;height:20px;background:#e2e2e2"></div>
<div class="a" style="left:1142px;top:737px;width:21px;height:20px;background:#e2e2e2"></div>
<div class="a" style="left:1165px;top:737px;width:20px;height:20px;background:#e2e2e2"></div>
<svg class="a" style="left:1073px;top:737px" width="140" height="20">
 <path d="M3 6 h14 v4 h-14z" fill="#f1c232" stroke="#8a6a00" stroke-width=".8"/>
 <path d="M10 8 v9 l2-2 l2 3 l1-1 l-2-3 h3z" fill="#fff" stroke="#333" stroke-width=".8"/>
 <path d="M25 14 l5-7 h9 l-3 7z" fill="#fff" stroke="#2e6fc0" stroke-width="1.1"/><path d="M25 11 h8" stroke="#2e6fc0"/>
 <path d="M35 8 v9 l2-2 l2 3 l1-1 l-2-3 h3z" fill="#fff" stroke="#333" stroke-width=".8"/>
 <path d="M50 5 h8 v3 h-8z M53 8 v8" fill="#f3a640" stroke="#b05a00" stroke-width=".9"/>
 <path d="M59 3 l5 5 M64 3 l-5 5" stroke="#e02a2a" stroke-width="1.6"/>
 <path d="M58 9 v8 l2-2 l2 3 l1-1 l-2-3 h3z" fill="#fff" stroke="#333" stroke-width=".8"/>
 <path d="M73 6 l6-3 v13 l-6 2z" fill="#bcdcf6" stroke="#2e6fc0"/>
 <path d="M82 3 l5 5 M87 3 l-5 5" stroke="#e02a2a" stroke-width="1.6"/>
 <path d="M81 9 v8 l2-2 l2 3 l1-1 l-2-3 h3z" fill="#fff" stroke="#333" stroke-width=".8"/>
 <path d="M95 7 h8 M99 3 v8" stroke="#222" stroke-width="1.3"/>
 <path d="M102 8 v9 l2-2 l2 3 l1-1 l-2-3 h3z" fill="#fff" stroke="#333" stroke-width=".8"/>
 <path d="M114 4 h13 l-5 6 v7 l-3-2 v-5z" fill="#eee" stroke="#555" stroke-width="1"/>
</svg>
<div class="t" style="left:1200px;top:743px;font-size:11px;color:#222">:0</div>

<!-- green badge -->
<div class="a" style="left:1251px;top:41px;width:42px;height:42px;border-radius:50%;background:#d9d9d9;box-shadow:0 1px 2px rgba(0,0,0,.35)"></div>
<div class="a" style="left:1253px;top:43px;width:38px;height:38px;border-radius:50%;background:radial-gradient(circle at 50% 25%,#7be27d,#3cc04a 45%,#2aa83a)"></div>
<div class="t" style="left:1257px;top:56px;font-size:11px;font-weight:bold;color:#fff">38</div>
<!-- view window controls -->
<div class="a" style="left:1208px;top:157px;width:10px;height:3px;background:#fff"></div>
<div class="a" style="left:1225px;top:153px;width:7px;height:6px;border:1.5px solid #fff;border-top-width:2px"></div>
<div class="a" style="left:1222px;top:156px;width:7px;height:6px;border:1.5px solid #fff;border-top-width:2px;background:#000"></div>
<svg class="a" style="left:1238px;top:152px" width="11" height="10"><path d="M1.5 1.5 l8 7 M9.5 1.5 l-8 7" stroke="#fff" stroke-width="2.2"/></svg>
<!-- nav bar -->
<div class="a" style="left:1222px;top:171px;width:28px;height:100px;background:#545454;border-radius:4px;border:1px solid #3a3a3a"></div>
<svg class="a" style="left:1222px;top:171px" width="28" height="100">
 <path d="M20 3 l4 4 M24 3 l-4 4" stroke="#ccc" stroke-width="1.2"/>
 <path d="M11.5 38 a9 9 0 1 1 9-9 v9z" fill="#a8a8a8"/>
 <circle cx="11.5" cy="26" r="4.5" fill="#8a8a8a" stroke="#333" stroke-width="1"/>
 <path d="M8.5 29.5 l-3 3.5" stroke="#333" stroke-width="1.2"/>
 <text x="14" y="36" font-size="7" font-weight="bold" fill="#2c5fb5" font-family="Liberation Sans">2D</text>
 <line x1="3" y1="50" x2="25" y2="50" stroke="#6a6a6a"/>
 <rect x="7" y="56" width="9" height="9" fill="#6fa04a"/>
 <circle cx="17" cy="64" r="3" fill="#c8c8c8"/>
 <path d="M19 90 l3 3 l3-3 M19 93 l3 3 l3-3" stroke="#ccc" fill="none" stroke-width="1"/>
</svg>

</body></html>
